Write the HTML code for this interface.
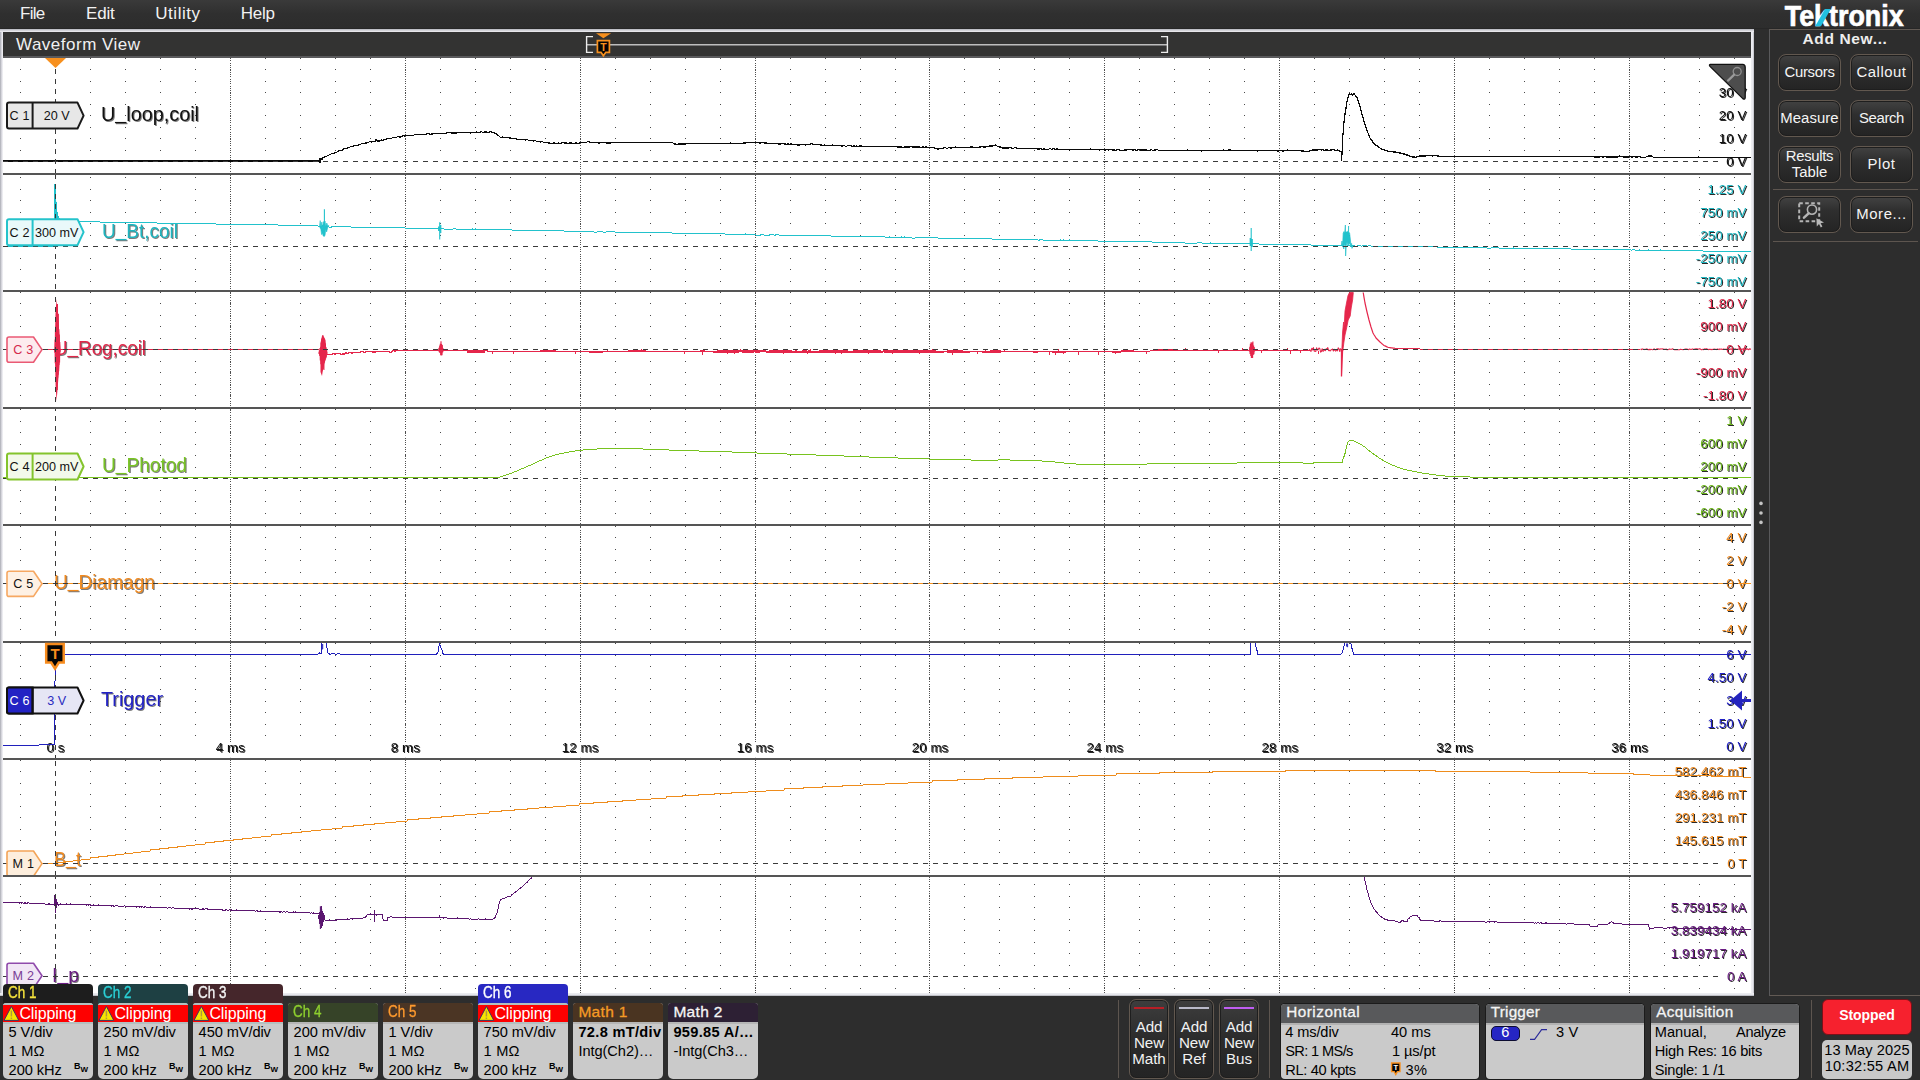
<!DOCTYPE html>
<html><head><meta charset="utf-8"><title>Tektronix Waveform View</title>
<style>
*{box-sizing:border-box;margin:0;padding:0}
html,body{width:1920px;height:1080px;overflow:hidden;background:#2d2d2d}
body{font-family:"Liberation Sans","DejaVu Sans",sans-serif;color:#fff;position:relative;font-size:15px}
.t{position:absolute;white-space:nowrap}
#menubar{position:absolute;left:0;top:0;width:1920px;height:29px;background:linear-gradient(#3a3a3a,#2f2f2f 50%,#2d2d2d);border-bottom:1px solid #272727}
#frame{position:absolute;left:0;top:29px;width:1754.2px;height:967px;background:linear-gradient(90deg,#a9aab2 0,#e4e4ea 2px,#f3f3f6 3px,#eeeef2 1751px,#e6e7ec 1753px,#a4a5ad 1754.2px)}
#frametop{position:absolute;left:0;top:29px;width:1754.2px;height:3px;background:linear-gradient(#b5b6be,#f1f1f4)}
#framebot{position:absolute;left:0;top:992.7px;width:1754.2px;height:3.3px;background:linear-gradient(#eeeef2,#e4e5ea 60%,#a4a5ad)}
#wvhead{position:absolute;left:3px;top:32px;width:1748px;height:26px;background:#333332;border-bottom:2px solid #5a5a5c}
#plot{position:absolute;left:3px;top:58px;width:1748px;height:934.7px;background:#fff;overflow:hidden}
#plot svg{position:absolute;left:0;top:0}
#side{position:absolute;left:1769px;top:29px;width:160px;height:967px;border:1px solid #625a54;border-left-color:#59595b;background:#2d2d2d}
.sbtn{position:absolute;width:63px;height:37px;border:1px solid #62584f;border-radius:8px;background:linear-gradient(#424242,#2e2e2e 40%,#242424);box-shadow:inset 0 0 0 1px #1e1e1e}
.hr{position:absolute;height:1px;background:#5d554f}
.vr{position:absolute;width:1px;background:#5d554f}
.badge{position:absolute;width:90px;top:1003px;height:76px;border-radius:3px 3px 5px 5px;background:linear-gradient(#b6b6b6 0,#b6b6b6 20.6px,#cacaca 21px);overflow:hidden}
.badge .hd{position:absolute;left:0;top:0;width:90px;height:19px}
.tab{position:absolute;width:90px;top:984px;height:24px;border-radius:4px 4px 0 0}
.clip{position:absolute;left:0;top:2px;width:90px;height:17px;background:#fe0000}
.info{position:absolute;top:1004px;height:75px;border-radius:4px;background:linear-gradient(#b2b2b2 0,#b2b2b2 20.6px,#cacaca 21px);overflow:hidden;box-shadow:0 0 0 1px #1b1b1b}
.info .hd{position:absolute;left:0;top:0;right:0;height:19px;background:#58595b}
.addbtn{position:absolute;top:999px;width:40px;height:80px;border:1px solid #62584f;border-radius:7px;background:linear-gradient(#3e3e3e,#2b2b2b 50%,#242424);box-shadow:inset 0 0 0 1px #1e1e1e}
.addbtn i{position:absolute;left:4px;right:4px;top:7px;height:2px;display:block}
.lbl{paint-order:stroke;stroke:#fff;stroke-linejoin:round}
</style></head>
<body>
<div id="menubar">
<span class="t" style="top:3.61px;font-size:17px;line-height:20px;color:#f2f2f2;letter-spacing:-0.7px;left:20px;">File</span>
<span class="t" style="top:3.61px;font-size:17px;line-height:20px;color:#f2f2f2;letter-spacing:-0.2px;left:86px;">Edit</span>
<span class="t" style="top:3.61px;font-size:17px;line-height:20px;color:#f2f2f2;letter-spacing:0.52px;left:155.3px;">Utility</span>
<span class="t" style="top:3.61px;font-size:17px;line-height:20px;color:#f2f2f2;letter-spacing:-0.25px;left:240.8px;">Help</span>
</div>
<svg class="t" style="left:1780px;top:0" width="130" height="30" viewBox="1780 0 130 30"><text x="1784.8" y="26.1" font-family="Liberation Sans, sans-serif" font-weight="bold" font-size="29.6" fill="#fff" stroke="#fff" stroke-width=".7" textLength="118.8" lengthAdjust="spacingAndGlyphs">Tektronix</text><polygon points="1815.2,26.2 1821,26.2 1830.8,9 1825,9" fill="#22bfe0"/></svg>
<div id="frame"></div><div id="frametop"></div><div id="framebot"></div>
<div id="wvhead">
<span class="t" style="top:2.61px;font-size:17px;line-height:20px;color:#f0f0f0;letter-spacing:0.5px;left:13px;">Waveform View</span>
</div>
<svg class="t" style="left:580px;top:30px" width="600" height="30" viewBox="580 30 600 30"><path d="M586.6 44.8H1167.4" fill="none" stroke="#bdbdbd" stroke-width="1.4"/><path d="M593 36.6H586.6V52.4H593M1161 36.6H1167.4V52.4H1161" fill="none" stroke="#ececec" stroke-width="1.4"/><polygon points="596,33.2 611.2,33.2 603.4,38.2" fill="#f7901e"/><path d="M597.4 40.7H609.4V52.3H605.8L603.4 55.8L601 52.3H597.4Z" fill="#050505" stroke="#f7901e" stroke-width="1.7"/><text x="603.4" y="50.6" text-anchor="middle" font-family="Liberation Sans, sans-serif" font-size="10.5" font-weight="bold" fill="#f7901e">T</text></svg>
<div id="plot"><svg width="1749" height="935" viewBox="3 58 1749 935" font-family="Liberation Sans, DejaVu Sans, sans-serif">
<g shape-rendering="crispEdges" stroke="#4a4a4a" stroke-width="1" fill="none">
<path d="M20 58.5H1752M20 69.5H1752M20 81.5H1752M20 92.5H1752M20 104.5H1752M20 115.5H1752M20 127.5H1752M20 138.5H1752M20 150.5H1752M20 177.5H1752M20 189.5H1752M20 200.5H1752M20 212.5H1752M20 223.5H1752M20 235.5H1752M20 258.5H1752M20 269.5H1752M20 281.5H1752M20 292.5H1752M20 303.5H1752M20 315.5H1752M20 326.5H1752M20 338.5H1752M20 361.5H1752M20 372.5H1752M20 384.5H1752M20 395.5H1752M20 409.5H1752M20 421.5H1752M20 432.5H1752M20 444.5H1752M20 455.5H1752M20 467.5H1752M20 490.5H1752M20 501.5H1752M20 513.5H1752M20 526.5H1752M20 537.5H1752M20 549.5H1752M20 560.5H1752M20 572.5H1752M20 595.5H1752M20 606.5H1752M20 618.5H1752M20 629.5H1752M20 643.5H1752M20 655.5H1752M20 666.5H1752M20 678.5H1752M20 689.5H1752M20 701.5H1752M20 712.5H1752M20 724.5H1752M20 735.5H1752M20 760.5H1752M20 771.5H1752M20 783.5H1752M20 794.5H1752M20 806.5H1752M20 817.5H1752M20 829.5H1752M20 840.5H1752M20 852.5H1752M20 884.5H1752M20 896.5H1752M20 907.5H1752M20 919.5H1752M20 930.5H1752M20 942.5H1752M20 953.5H1752M20 965.5H1752M20 988.5H1752" stroke-dasharray="1 33.980"/>
<path d="M55.5 58V993" stroke="#fff"/>
<path d="M230.5 58V993M405.5 58V993M580.5 58V993M755.5 58V993M929.5 58V993M1104.5 58V993M1279.5 58V993M1454.5 58V993M1629.5 58V993" stroke-dasharray="1 1.3" stroke="#505050"/>
<rect x="3" y="173" width="1749" height="2" fill="#555" stroke="none"/>
<rect x="3" y="290" width="1749" height="2" fill="#555" stroke="none"/>
<rect x="3" y="407" width="1749" height="2" fill="#555" stroke="none"/>
<rect x="3" y="524" width="1749" height="2" fill="#555" stroke="none"/>
<rect x="3" y="641" width="1749" height="2" fill="#555" stroke="none"/>
<rect x="3" y="758" width="1749" height="2" fill="#555" stroke="none"/>
<rect x="3" y="875" width="1749" height="2" fill="#555" stroke="none"/>
</g>
<rect x="1717.8" y="87.1" width="30.4" height="11" fill="#fff"/><rect x="1717.8" y="110.1" width="30.4" height="11" fill="#fff"/><rect x="1717.8" y="133.1" width="30.4" height="11" fill="#fff"/><rect x="1725.3" y="156.1" width="22.9" height="11" fill="#fff"/><rect x="1706.5" y="183.6" width="41.7" height="11" fill="#fff"/><rect x="1699.2" y="207.1" width="49.0" height="11" fill="#fff"/><rect x="1699.2" y="230.1" width="49.0" height="11" fill="#fff"/><rect x="1694.6" y="253.1" width="53.6" height="11" fill="#fff"/><rect x="1694.6" y="276.1" width="53.6" height="11" fill="#fff"/><rect x="1706.5" y="298.1" width="41.7" height="11" fill="#fff"/><rect x="1699.2" y="321.1" width="49.0" height="11" fill="#fff"/><rect x="1725.3" y="344.1" width="22.9" height="11" fill="#fff"/><rect x="1694.6" y="367.1" width="53.6" height="11" fill="#fff"/><rect x="1702.0" y="390.1" width="46.2" height="11" fill="#fff"/><rect x="1725.3" y="415.1" width="22.9" height="11" fill="#fff"/><rect x="1699.2" y="438.1" width="49.0" height="11" fill="#fff"/><rect x="1699.2" y="461.1" width="49.0" height="11" fill="#fff"/><rect x="1694.6" y="484.1" width="53.6" height="11" fill="#fff"/><rect x="1694.6" y="507.1" width="53.6" height="11" fill="#fff"/><rect x="1725.3" y="532.1" width="22.9" height="11" fill="#fff"/><rect x="1725.3" y="555.1" width="22.9" height="11" fill="#fff"/><rect x="1725.3" y="578.1" width="22.9" height="11" fill="#fff"/><rect x="1720.8" y="601.1" width="27.4" height="11" fill="#fff"/><rect x="1720.8" y="624.1" width="27.4" height="11" fill="#fff"/><rect x="1725.3" y="649.1" width="22.9" height="11" fill="#fff"/><rect x="1706.5" y="672.1" width="41.7" height="11" fill="#fff"/><rect x="1725.3" y="695.1" width="22.9" height="11" fill="#fff"/><rect x="1706.5" y="718.1" width="41.7" height="11" fill="#fff"/><rect x="1725.3" y="741.1" width="22.9" height="11" fill="#fff"/><rect x="1673.6" y="766.1" width="74.6" height="11" fill="#fff"/><rect x="1673.6" y="789.1" width="74.6" height="11" fill="#fff"/><rect x="1673.6" y="812.1" width="74.6" height="11" fill="#fff"/><rect x="1673.6" y="835.1" width="74.6" height="11" fill="#fff"/><rect x="1726.3" y="858.1" width="21.9" height="11" fill="#fff"/><rect x="1669.8" y="902.1" width="78.4" height="11" fill="#fff"/><rect x="1669.8" y="925.1" width="78.4" height="11" fill="#fff"/><rect x="1669.8" y="948.1" width="78.4" height="11" fill="#fff"/><rect x="1726.1" y="971.1" width="22.1" height="11" fill="#fff"/>
<g font-size="13.3" letter-spacing=".1" text-anchor="end" style="filter:drop-shadow(1px 1px 0 rgba(5,5,5,.85))">
<text x="1746.6" y="97.1" fill="#111">30 V</text>
<text x="1746.6" y="120.1" fill="#111">20 V</text>
<text x="1746.6" y="143.1" fill="#111">10 V</text>
<text x="1746.6" y="166.1" fill="#111">0 V</text>
<text x="1746.6" y="193.6" fill="#1fb5bf">1.25 V</text>
<text x="1746.6" y="217.1" fill="#1fb5bf">750 mV</text>
<text x="1746.6" y="240.1" fill="#1fb5bf">250 mV</text>
<text x="1746.6" y="263.1" fill="#1fb5bf">-250 mV</text>
<text x="1746.6" y="286.1" fill="#1fb5bf">-750 mV</text>
<text x="1746.6" y="308.1" fill="#e0284a">1.80 V</text>
<text x="1746.6" y="331.1" fill="#e0284a">900 mV</text>
<text x="1746.6" y="354.1" fill="#e0284a">0 V</text>
<text x="1746.6" y="377.1" fill="#e0284a">-900 mV</text>
<text x="1746.6" y="400.1" fill="#e0284a">-1.80 V</text>
<text x="1746.6" y="425.1" fill="#6db81c">1 V</text>
<text x="1746.6" y="448.1" fill="#6db81c">600 mV</text>
<text x="1746.6" y="471.1" fill="#6db81c">200 mV</text>
<text x="1746.6" y="494.1" fill="#6db81c">-200 mV</text>
<text x="1746.6" y="517.1" fill="#6db81c">-600 mV</text>
<text x="1746.6" y="542.1" fill="#f08a20">4 V</text>
<text x="1746.6" y="565.1" fill="#f08a20">2 V</text>
<text x="1746.6" y="588.1" fill="#f08a20">0 V</text>
<text x="1746.6" y="611.1" fill="#f08a20">-2 V</text>
<text x="1746.6" y="634.1" fill="#f08a20">-4 V</text>
<text x="1746.6" y="659.1" fill="#2222c4">6 V</text>
<text x="1746.6" y="682.1" fill="#2222c4">4.50 V</text>
<text x="1746.6" y="705.1" fill="#2222c4">3 V</text>
<text x="1746.6" y="728.1" fill="#2222c4">1.50 V</text>
<text x="1746.6" y="751.1" fill="#2222c4">0 V</text>
<text x="1746.6" y="776.1" fill="#f08a20">582.462 mT</text>
<text x="1746.6" y="799.1" fill="#f08a20">436.846 mT</text>
<text x="1746.6" y="822.1" fill="#f08a20">291.231 mT</text>
<text x="1746.6" y="845.1" fill="#f08a20">145.615 mT</text>
<text x="1746.6" y="868.1" fill="#f08a20">0 T</text>
<text x="1746.6" y="912.1" fill="#6a1c82">5.759152 kA</text>
<text x="1746.6" y="935.1" fill="#6a1c82">3.839434 kA</text>
<text x="1746.6" y="958.1" fill="#6a1c82">1.919717 kA</text>
<text x="1746.6" y="981.1" fill="#6a1c82">0 A</text>
</g>
<rect x="45.6" y="742.8" width="20.7" height="15" fill="#fff"/><rect x="215.0" y="742.8" width="31.8" height="15" fill="#fff"/><rect x="389.9" y="742.8" width="31.8" height="15" fill="#fff"/><rect x="561.1" y="742.8" width="39.2" height="15" fill="#fff"/><rect x="736.0" y="742.8" width="39.2" height="15" fill="#fff"/><rect x="910.9" y="742.8" width="39.2" height="15" fill="#fff"/><rect x="1085.8" y="742.8" width="39.2" height="15" fill="#fff"/><rect x="1260.7" y="742.8" width="39.2" height="15" fill="#fff"/><rect x="1435.6" y="742.8" width="39.2" height="15" fill="#fff"/><rect x="1610.5" y="742.8" width="39.2" height="15" fill="#fff"/>
<g font-size="13.3" letter-spacing=".1" text-anchor="middle" fill="#111" style="filter:drop-shadow(1px 1px 0 rgba(5,5,5,.85))">
<text x="55.5" y="752.2">0 s</text>
<text x="230.4" y="752.2">4 ms</text>
<text x="405.3" y="752.2">8 ms</text>
<text x="580.2" y="752.2">12 ms</text>
<text x="755.1" y="752.2">16 ms</text>
<text x="930.0" y="752.2">20 ms</text>
<text x="1104.9" y="752.2">24 ms</text>
<text x="1279.8" y="752.2">28 ms</text>
<text x="1454.7" y="752.2">32 ms</text>
<text x="1629.6" y="752.2">36 ms</text>
</g>
<g font-size="21" style="filter:drop-shadow(1px 1px 0 rgba(17,17,17,.55))">
<text x="101" y="120.8" fill="#111" textLength="98" lengthAdjust="spacingAndGlyphs">U<tspan dy="-1.8">_</tspan><tspan dy="1.8">loop,coil</tspan></text>
<text x="102" y="237.6" fill="#1fb5bf" textLength="76" lengthAdjust="spacingAndGlyphs">U<tspan dy="-1.8">_</tspan><tspan dy="1.8">Bt,coil</tspan></text>
<text x="54" y="354.8" fill="#e0284a" textLength="92" lengthAdjust="spacingAndGlyphs">U<tspan dy="-1.8">_</tspan><tspan dy="1.8">Rog,coil</tspan></text>
<text x="102" y="471.7" fill="#78c424" textLength="85" lengthAdjust="spacingAndGlyphs">U<tspan dy="-1.8">_</tspan><tspan dy="1.8">Photod</tspan></text>
<text x="54" y="589.0" fill="#f08a20" textLength="101" lengthAdjust="spacingAndGlyphs">U<tspan dy="-1.8">_</tspan><tspan dy="1.8">Diamagn</tspan></text>
<text x="101" y="705.7" fill="#2222c4" textLength="62" lengthAdjust="spacingAndGlyphs">Trigger</text>
<text x="54" y="865.9" fill="#f08a20" textLength="27" lengthAdjust="spacingAndGlyphs">B<tspan dy="-1.8">_</tspan><tspan dy="1.8">t</tspan></text>
<text x="52" y="981.8" fill="#6a1c82" textLength="27" lengthAdjust="spacingAndGlyphs">I<tspan dy="-1.8">_</tspan><tspan dy="1.8">p</tspan></text>
</g>
<path d="M3 161L4 161L5 161L6 161L7 161L8 161L9 161L10 161L11 161L12 161L13 161L14 161L15 161L16 161L17 161L18 161L19 161L20 161L21 161L22 161L23 161L24 161L25 161L26 161L27 161L28 161L29 161L30 161L31 161L32 161L33 161L34 161L35 161L36 161L37 161L38 161L39 161L40 161L41 161L42 161L43 161L44 161L45 161L46 161L47 161L48 161L49 161L50 161L51 161L52 161L53 161L54 161L55 161L56 161L57 161L58 161L59 161L60 161L61 161L62 161L63 161L64 161L65 161L66 161L67 161L68 161L69 161L70 161L71 161L72 161L73 161L74 161L75 161L76 161L77 161L78 161L79 161L80 161L81 161L82 161L83 161L84 161L85 161L86 161L87 161L88 161L89 161L90 161L91 161L92 161L93 161L94 161L95 161L96 161L97 161L98 161L99 161L100 161L101 161L102 161L103 161L104 161L105 161L106 161L107 161L108 161L109 161L110 161L111 161L112 161L113 161L114 161L115 161L116 161L117 161L118 161L119 161L120 161L121 161L122 161L123 161L124 161L125 161L126 161L127 161L128 161L129 161L130 161L131 161L132 161L133 161L134 161L135 161L136 161L137 161L138 161L139 161L140 161L141 161L142 161L143 161L144 161L145 161L146 161L147 161L148 161L149 161L150 161L151 161L152 161L153 161L154 161L155 161L156 161L157 161L158 161L159 161L160 161L161 161L162 161L163 161L164 161L165 161L166 161L167 161L168 161L169 161L170 161L171 161L172 161L173 161L174 161L175 161L176 161L177 161L178 161L179 161L180 161L181 161L182 161L183 161L184 161L185 161L186 161L187 161L188 161L189 161L190 161L191 161L192 161L193 161L194 161L195 161L196 161L197 161L198 161L199 161L200 161L201 161L202 161L203 161L204 161L205 161L206 161L207 161L208 161L209 161L210 161L211 161L212 161L213 161L214 161L215 161L216 161L217 161L218 161L219 161L220 161L221 161L222 161L223 161L224 161L225 161L226 161L227 161L228 161L229 161L230 161L231 161L232 161L233 161L234 161L235 161L236 161L237 161L238 161L239 161L240 161L241 161L242 161L243 161L244 161L245 161L246 161L247 161L248 161L249 161L250 161L251 161L252 161L253 161L254 161L255 161L256 161L257 161L258 161L259 161L260 161L261 161L262 161L263 161L264 161L265 161L266 161L267 161L268 161L269 161L270 161L271 161L272 161L273 161L274 161L275 161L276 161L277 161L278 161L279 161L280 161L281 161L282 161L283 161L284 161L285 161L286 161L287 161L288 161L289 161L290 161L291 161L292 161L293 161L294 161L295 161L296 161L297 161L298 161L299 161L300 161L301 161L302 161L303 161L304 161L305 161L306 161L307 161L308 161L309 161L310 161L311 161L312 161L313 161L314 161L315 161L316 161L317 161L318 161L319 161L319.5 158.5L320 163L321 158.5L322 160L323 157.5L324 157L325 157L326 156.5L327 156L328 155.5L329 155L330 154.5L331 154L332 153.5L333 153.5L334 153L335 153L336 152.5L337 152L338 151.5L339 150.5L340 150.5L341 150L342 150.5L343 149L344 149L345 148.5L346 148.5L347 148L348 148L349 147.5L350 147L351 146.5L352 146.5L353 146.5L354 145.5L355 146L356 145.5L357 145.5L358 145L359 145L360 144.5L361 144L362 143.5L363 144L364 143.5L365 143L366 143L367 143L368 142.5L369 142L370 141.5L371 142L372 142L373 141.5L374 141.5L375 141.5L376 139.5L377 141L378 141L379 141L380 141L381 140L382 140L383 140.5L384 139.5L385 139.5L386 139.5L387 138.5L388 139L389 138.5L390 138.5L391 138.5L392 138L393 137.5L394 137.5L395 137.5L396 137.5L397 137L398 136.5L399 137L400 137L401 137L402 136.5L403 135.5L404 136L405 136L406 135.5L407 135.5L408 136L409 135.5L410 135.5L411 135.5L412 135L413 135.5L414 135L415 134.5L416 135L417 134.5L418 135L419 134.5L420 134.5L421 134L422 134.5L423 134.5L424 134.5L425 134.5L426 134.5L427 133.5L428 134L429 133.5L430 134.5L431 134L432 134L433 134L434 133.5L435 134L436 133.5L437 133.5L438 133.5L439 133.5L440 133.5L441 133.5L442 133.5L443 133L444 133.5L445 133.5L446 133L447 133L448 132.5L449 133L450 132.5L451 133L452 133L453 133L454 133L455 133L456 133L457 133L458 132.5L459 133L460 132.5L461 132L462 132.5L463 133L464 132.5L465 132.5L466 132.5L467 132L468 133L469 132.5L470 133L471 133L472 132.5L473 132.5L474 132.5L475 133L476 132L477 132L478 132.5L479 132.5L480 132.5L481 131.5L482 132L483 132.5L484 132L485 132L486 132L487 132L488 132.5L489 132L490 132L491 131.5L492 132.5L493 132L494 133L495 133L496 133.5L497 134.5L498 135.5L499 136L500 137L501 137.5L502 137L503 137L504 137.5L505 137.5L506 137.5L507 138L508 137.5L509 138L510 138L511 138L512 138.5L513 138.5L514 138.5L515 138.5L516 139L517 139L518 139.5L519 139.5L520 139L521 139.5L522 139.5L523 139.5L524 139.5L525 140L526 140L527 139.5L528 140L529 140.5L530 140.5L531 141L532 140.5L533 141L534 141L535 140.5L536 141L537 141.5L538 141.5L539 141.5L540 142L541 142L542 141.5L543 142L544 143L545 142.5L546 143L547 142.5L548 143L549 143L550 143L551 143.5L552 143.5L553 143L554 143L555 143L556 143.5L557 143.5L558 143L559 143L560 143.5L561 143L562 143L563 142.5L564 143L565 143L566 143L567 143L568 143.5L569 143L570 143L571 143L572 143L573 143.5L574 143.5L575 143L576 143L577 143L578 143.5L579 143L580 143L581 142.5L582 142.5L583 142.5L584 143L585 142.5L586 142.5L587 142L588 141.5L589 142L590 142L591 142.5L592 142.5L593 142.5L594 142.5L595 142.5L596 143L597 142L598 143L599 143L600 143L601 142.5L602 142.5L603 142.5L604 142.5L605 142.5L606 143L607 143L608 143L609 143L610 143L611 143L612 142.5L613 143L614 142L615 142.5L616 142.5L617 142.5L618 142.5L619 142.5L620 143L621 142.5L622 142.5L623 143L624 142.5L625 142.5L626 142.5L627 142L628 142.5L629 142.5L630 142.5L631 142L632 142.5L633 142L634 142.5L635 142.5L636 142.5L637 142.5L638 142.5L639 142L640 142.5L641 142.5L642 142.5L643 142.5L644 143L645 142.5L646 142L647 142.5L648 142.5L649 142.5L650 143L651 142.5L652 142L653 142.5L654 142.5L655 142.5L656 142.5L657 142L658 143L659 142.5L660 142.5L661 142L662 142.5L663 142.5L664 142.5L665 142L666 142.5L667 142.5L668 142.5L669 142.5L670 142.5L671 142.5L672 142.5L673 143L674 144L675 144L676 144L677 144.5L678 144L679 144L680 144L681 144L682 144L683 144L684 144L685 144L686 144L687 143.5L688 143.5L689 143.5L690 143L691 143.5L692 143.5L693 143L694 143.5L695 143L696 143.5L697 143.5L698 143.5L699 143.5L700 143.5L701 143.5L702 143.5L703 143.5L704 143.5L705 143.5L706 143.5L707 143.5L708 143.5L709 143.5L710 143.5L711 144L712 143.5L713 143.5L714 143.5L715 143.5L716 143.5L717 143.5L718 144L719 143.5L720 143.5L721 143.5L722 143.5L723 143L724 143.5L725 143.5L726 143.5L727 143.5L728 143.5L729 143.5L730 143L731 143L732 144L733 143.5L734 143.5L735 143.5L736 143.5L737 143L738 143.5L739 143.5L740 143L741 143.5L742 143.5L743 143L744 143L745 143L746 143L747 142.5L748 143L749 142.5L750 142.5L751 142.5L752 143L753 142.5L754 142.5L755 142.5L756 142.5L757 142.5L758 142.5L759 143L760 143L761 143L762 142.5L763 142.5L764 143L765 143L766 143L767 143L768 143.5L769 143L770 143.5L771 143.5L772 144L773 143.5L774 143L775 143.5L776 143.5L777 143.5L778 144L779 144L780 144L781 144L782 143.5L783 143.5L784 144L785 144L786 144L787 144.5L788 143.5L789 144.5L790 144L791 144L792 144L793 144.5L794 144.5L795 144.5L796 144.5L797 145L798 145L799 145L800 145L801 144.5L802 144.5L803 144.5L804 144.5L805 145L806 145L807 144.5L808 144.5L809 144.5L810 144L811 144L812 143.5L813 144.5L814 144.5L815 144.5L816 144.5L817 145L818 144.5L819 144.5L820 145L821 145L822 145L823 145.5L824 145L825 145L826 145.5L827 145.5L828 145.5L829 145.5L830 145.5L831 145.5L832 145L833 145L834 146L835 145.5L836 145.5L837 145L838 145.5L839 146L840 145.5L841 146L842 146L843 146L844 145.5L845 146L846 146.5L847 146L848 145.5L849 145.5L850 145.5L851 146L852 146L853 146.5L854 145.5L855 146.5L856 146L857 146L858 146.5L859 146L860 146L861 146L862 146L863 146.5L864 146.5L865 146.5L866 146L867 146.5L868 146.5L869 146L870 146.5L871 146L872 147L873 146.5L874 147L875 146L876 146.5L877 146L878 146.5L879 146.5L880 146L881 147L882 146.5L883 146.5L884 146.5L885 146L886 146.5L887 146L888 146.5L889 147L890 146.5L891 146.5L892 146.5L893 146.5L894 147L895 146.5L896 146L897 147L898 147L899 147L900 147L901 147L902 147L903 147.5L904 147L905 147L906 147L907 147L908 147L909 147L910 147L911 146.5L912 147L913 147L914 147L915 147L916 147L917 147L918 147L919 147L920 147L921 147.5L922 147L923 147L924 147L925 147.5L926 146.5L927 147.5L928 147.5L929 147L930 147.5L931 148L932 147L933 147.5L934 147.5L935 148.5L936 148.5L937 149L938 149L939 149L940 148.5L941 148.5L942 148.5L943 148L944 148L945 147.5L946 148L947 148.5L948 148L949 147.5L950 148L951 148L952 148L953 147.5L954 148L955 147L956 147L957 148L958 147.5L959 147.5L960 147.5L961 148L962 147.5L963 147.5L964 147.5L965 147.5L966 147.5L967 147.5L968 147.5L969 147.5L970 147L971 147L972 147L973 147L974 147.5L975 147L976 147.5L977 147L978 147.5L979 147L980 147L981 147L982 146.5L983 147L984 147L985 147L986 147L987 146.5L988 146.5L989 146L990 146L991 146L992 146L993 146L994 145.5L995 145L996 145L997 146L998 146.5L999 147L1000 147L1001 147L1002 148L1003 148L1004 148L1005 148L1006 148L1007 148L1008 148L1009 148L1010 147.5L1011 148L1012 148L1013 148.5L1014 148L1015 147.5L1016 148L1017 148L1018 148.5L1019 148.5L1020 148.5L1021 148.5L1022 148L1023 148.5L1024 148.5L1025 148.5L1026 149L1027 148.5L1028 148L1029 148.5L1030 148L1031 148.5L1032 148.5L1033 148.5L1034 148L1035 149L1036 148L1037 149L1038 149L1039 149L1040 149L1041 148.5L1042 149.5L1043 149L1044 149L1045 149L1046 149.5L1047 149L1048 149.5L1049 149L1050 148.5L1051 149L1052 149.5L1053 148.5L1054 149L1055 149L1056 149.5L1057 148.5L1058 149.5L1059 149.5L1060 149.5L1061 149.5L1062 149.5L1063 149.5L1064 149.5L1065 149.5L1066 149.5L1067 149.5L1068 149L1069 150L1070 150L1071 149.5L1072 149.5L1073 149.5L1074 149.5L1075 150L1076 149.5L1077 149L1078 150L1079 149.5L1080 149.5L1081 150L1082 149.5L1083 149L1084 149.5L1085 149L1086 149.5L1087 150L1088 149.5L1089 149.5L1090 149L1091 149L1092 149.5L1093 149.5L1094 149.5L1095 149.5L1096 149L1097 150L1098 149.5L1099 150L1100 150L1101 149.5L1102 150L1103 149.5L1104 150L1105 150L1106 150L1107 149.5L1108 150L1109 150L1110 149.5L1111 149.5L1112 150L1113 150L1114 150L1115 150L1116 150.5L1117 149.5L1118 149.5L1119 150L1120 150L1121 150.5L1122 150L1123 150.5L1124 150L1125 150L1126 150L1127 150L1128 149.5L1129 150L1130 149.5L1131 149.5L1132 150L1133 150L1134 150L1135 149.5L1136 150.5L1137 150L1138 150L1139 149.5L1140 150L1141 150L1142 150L1143 150L1144 150L1145 150L1146 150L1147 150L1148 150.5L1149 150L1150 150.5L1151 149.5L1152 150L1153 150.5L1154 150L1155 150L1156 150L1157 149.5L1158 150L1159 150.5L1160 150.5L1161 150L1162 150.5L1163 150.5L1164 150.5L1165 150.5L1166 150.5L1167 150.5L1168 150L1169 150.5L1170 150.5L1171 150.5L1172 150L1173 150.5L1174 150.5L1175 151L1176 150.5L1177 150.5L1178 150L1179 150.5L1180 151L1181 150.5L1182 150L1183 151L1184 150.5L1185 150.5L1186 150.5L1187 150L1188 150L1189 150.5L1190 150.5L1191 150.5L1192 150.5L1193 150L1194 150.5L1195 151L1196 150.5L1197 150.5L1198 150L1199 150.5L1200 150.5L1201 151L1202 151L1203 150L1204 151L1205 150L1206 151L1207 150.5L1208 150.5L1209 150L1210 150.5L1211 150.5L1212 150.5L1213 150.5L1214 150L1215 150.5L1216 150.5L1217 150.5L1218 150.5L1219 150.5L1220 151L1221 150.5L1222 150.5L1223 150L1224 150L1225 150.5L1226 151L1227 150.5L1228 150L1229 150L1230 150L1231 150L1232 150.5L1233 150.5L1234 150.5L1235 150.5L1236 150.5L1237 150L1238 150.5L1239 150.5L1240 150.5L1241 150.5L1242 150.5L1243 150.5L1244 150.5L1245 150.5L1246 150L1247 150.5L1248 150.5L1249 150.5L1250 150.5L1251 150.5L1252 150L1253 150.5L1254 150.5L1255 150.5L1256 150.5L1257 151L1258 151L1259 150.5L1260 150.5L1261 150.5L1262 150.5L1263 150L1264 150.5L1265 150.5L1266 150.5L1267 150.5L1268 150.5L1269 150.5L1270 150.5L1271 150.5L1272 150.5L1273 150L1274 151L1275 150.5L1276 150.5L1277 151L1278 151L1279 151L1280 150.5L1281 150.5L1282 151L1283 151L1284 151L1285 150L1286 150.5L1287 150L1288 150L1289 150.5L1290 150.5L1291 150.5L1292 151L1293 150.5L1294 150.5L1295 150.5L1296 150.5L1297 150.5L1298 150.5L1299 150.5L1300 150.5L1301 151L1302 151L1303 151L1304 151L1305 151.5L1306 151.5L1307 151.5L1308 152L1309 151L1310 151L1311 150.5L1312 150L1313 150L1314 150L1315 150L1316 150L1317 150L1318 150L1319 149.5L1320 149.5L1321 150L1322 150L1323 149.5L1324 150.5L1325 150L1326 150L1327 150L1328 150L1329 150.5L1330 150L1331 150L1332 150L1333 149.5L1334 150L1335 150L1336 150.5L1337 150L1338 150L1339 151L1340 151L1341.2 152L1341.6 160L1342.2 150L1342.8 136.5L1343.6 127L1344.4 118L1345.6 110.5L1346.7 103.5L1347.6 99L1348.5 95L1349.5 93.5L1350.5 94.5L1351.5 93.5L1352.5 95L1353.5 93.5L1354.2 94L1355 95L1356.1 96.5L1357.2 98L1358.3 101.5L1359.5 105L1360.6 109L1361.7 113L1362.8 117L1363.9 121L1364.8 124L1365.8 127L1366.7 130L1367.8 132.5L1368.9 135L1370 138L1371.1 139.5L1372.2 141L1373.3 143L1374.4 144L1375.5 145L1376.7 145.5L1377.8 146.5L1378.9 147.5L1380 148L1381.1 148.5L1382.2 149.5L1383.2 149.5L1384.1 150L1385.1 150L1386 150.5L1387 151L1387.9 151L1388.9 151.5L1389.9 151.5L1390.9 151.5L1391.9 151.5L1392.9 152L1393.8 152L1394.8 152L1395.8 152L1396.8 152.5L1397.8 152.5L1398.7 152.5L1399.7 153L1400.6 153L1401.6 153.5L1402.5 153.5L1403.5 154L1404.4 154L1405.3 154.5L1406.3 155L1407.2 155L1408.2 155.5L1409.1 156L1410.1 156L1411 156.5L1411.9 156.5L1412.8 157L1413.8 157L1414.7 157L1415.6 157.5L1416.7 157L1417.8 156.5L1418.9 156L1419.9 156L1420.9 156L1421.9 156L1422.9 156L1423.9 156L1424.9 156L1425.9 156L1426.9 155.5L1427.9 156L1428.9 155.5L1429.9 156L1430.9 155.5L1431.9 156L1432.9 156L1433.9 155.5L1434.9 156L1435.9 155.5L1436.9 156L1437.9 156L1438.9 156L1440 156.5L1441 156L1442 156.5L1443 156.5L1444 156.5L1445 156.5L1446 156.5L1447 156.5L1448 156.5L1449 156.5L1450 156.5L1451 156.5L1452 156.5L1453 156.5L1454 156.5L1455 156.5L1456 156.5L1457 156.5L1458 156.5L1459 156L1460 156.5L1461 156.5L1462 156L1463 156.5L1464 156.5L1465 156.5L1466 156.5L1467 156L1468 156.5L1469 156.5L1470 156.5L1471 156.5L1472 156.5L1473 156.5L1474 156L1475 156.5L1476 156.5L1477 156.5L1478 156.5L1479 156.5L1480 156L1481 156.5L1482 156.5L1483 156.5L1484 156.5L1485 156.5L1486 156.5L1487 156.5L1488 156.5L1489 156.5L1490 156.5L1491 156.5L1492 156.5L1493 156.5L1494 156.5L1495 156L1496 156.5L1497 156.5L1498 156.5L1499 156.5L1500 156.5L1501 156L1502 156.5L1503 156.5L1504 156.5L1505 156.5L1506 156.5L1507 156.5L1508 156.5L1509 156.5L1510 156.5L1511 156.5L1512 156.5L1513 156.5L1514 156L1515 156.5L1516 156.5L1517 156.5L1518 156.5L1519 156.5L1520 156.5L1521 156.5L1522 156.5L1523 156.5L1524 156.5L1525 156L1526 156.5L1527 156.5L1528 156.5L1529 156.5L1530 156.5L1531 156.5L1532 156.5L1533 156.5L1534 156.5L1535 156.5L1536 156.5L1537 156.5L1538 156.5L1539 156.5L1540 156.5L1541 156.5L1542 156.5L1543 156.5L1544 156.5L1545 156.5L1546 156L1547 156.5L1548 156.5L1549 156.5L1550 156.5L1551 156.5L1552 156.5L1553 156.5L1554 156.5L1555 156.5L1556 156.5L1557 156.5L1558 156.5L1559 156.5L1560 156L1561 156.5L1562 156.5L1563 156.5L1564 156.5L1565 156.5L1566 156.5L1567 156.5L1568 156.5L1569 156.5L1570 156.5L1571 156.5L1572 156.5L1573 156.5L1574 156.5L1575 156.5L1576 156.5L1577 156.5L1578 156.5L1579 156.5L1580 156.5L1581 156.5L1582 156.5L1583 156.5L1584 156.5L1585 156.5L1586 156.5L1587 156.5L1588 156.5L1589 156.5L1590 156L1591 156.5L1592 156.5L1593 156.5L1594 157L1595 157L1596 157L1597 157L1598 157L1599 157L1600 157L1601 156.5L1602 157L1603 157L1604 157L1605 156.5L1606 157L1607 157L1608 157L1609 157L1610 157L1611 157L1612 157L1613 157L1614 157L1615 157L1616 157L1617 157L1618 157L1619 156L1620 156L1621 156.5L1622 156L1623 157L1624 157L1625 157L1626 157L1627 157L1628 157L1629 157L1630 156.5L1631 157L1632 157L1633 157L1634 156.5L1635 157L1636 157L1637 157L1638 157L1639 156.5L1640 157L1641 157L1642 157.5L1643 157.5L1644 157.5L1645 157.5L1646 157L1647 156.5L1648 156L1649 156L1650 156L1651 156L1652 156L1653 157L1654 157.5L1655 157.5L1656 157.5L1657 157.5L1658 157.5L1659 157.5L1660 157.5L1661 157.5L1662 157.5L1663 157.5L1664 157.5L1665 157.5L1666 157.5L1667 157.5L1668 157.5L1669 157.5L1670 157.5L1671 157.5L1672 157.5L1673 157.5L1674 157.5L1675 157.5L1676 157.5L1677 157.5L1678 157.5L1679 157.5L1680 157.5L1681 157.5L1682 157.5L1683 157.5L1684 157.5L1685 157.5L1686 157.5L1687 157.5L1688 157.5L1689 157.5L1690 157.5L1691 157.5L1692 157.5L1693 157.5L1694 157.5L1695 157.5L1696 157.5L1697 157.5L1698 157L1699 157L1700 157.5L1701 157.5L1702 157.5L1703 157.5L1704 157.5L1705 157.5L1706 157.5L1707 157.5L1708 157.5L1709 157L1710 157.5L1711 157.5L1712 157.5L1713 157.5L1714 157.5L1715 157L1716 157.5L1717 157.5L1718 157.5L1719 157.5L1720 157.5L1721 157.5L1722 157.5L1723 157.5L1724 157.5L1725 157.5L1726 157.5L1727 157L1728 157.5L1729 157.5L1730 157.5L1731 157L1732 157.5L1733 157.5L1734 157.5L1735 157.5L1736 157.5L1737 157L1738 157.5L1739 157.5L1740 157.5L1741 157.5L1742 157.5L1743 157.5L1744 157L1745 157.5L1746 157.5L1747 157.5L1748 157.5L1749 157.5L1750 157.5L1751 157.5L1752 157.5" fill="none" stroke="#0a0a0a" stroke-width="1.2" stroke-linejoin="round" shape-rendering="crispEdges" />
<path d="M3 246L3.5 246L4 246L4.5 246L5 246L5.5 246L6 246L6.5 246L7 246L7.5 246L8 246L8.5 246L9 246L9.5 246L10 246L10.5 246L11 246L11.5 246L12 246L12.5 246L13 246L13.5 246L14 246L14.5 246L15 246L15.5 246L16 246L16.5 246L17 246L17.5 246L18 246L18.5 246L19 246L19.5 246L20 246L20.5 246L21 246L21.5 246L22 246L22.5 246L23 246L23.5 246L24 246L24.5 246L25 246L25.5 246L26 246L26.5 246L27 246L27.5 246L28 246L28.5 246L29 246L29.5 246L30 246L30.5 246L31 246L31.5 246L32 246L32.5 246L33 246L33.5 246L34 246L34.5 246L35 246L35.5 246L36 246L36.5 246L37 246L37.5 246L38 246L38.5 246L39 246L39.5 246L40 246L40.5 246L41 246L41.5 246L42 246L42.5 246L43 246L43.5 246L44 246L44.5 246L45 246L45.5 246L46 246L46.5 246L47 246L47.5 246L48 246L48.5 246L49 246L49.5 246L50 246L50.5 246L51 246L51.5 246L52 246L52.5 246L53 246L53.5 246L54 246L54.5 220L55 184.5L55.6 196L56.2 205L56.6 208.5L57 212L57.5 214.2L58 216.5L58.5 217.3L59 218.2L59.5 219L60 219.3L60.5 219.6L61 220L61.5 220.3L62 220.6L62.5 220.6L63 220.7L63.5 220.7L64 220.8L64.5 220.8L65 220.9L65.5 220.9L66 220.9L66.5 221L67 221L67.5 221.1L68 221.1L68.5 221.2L69 221.2L69.5 221.3L70 221.3L70.5 221.3L71 221.3L71.5 221.3L72 221.4L72.5 221.4L73 221.4L73.5 221.4L74 221.4L74.5 221.4L75 221.4L75.5 221.4L76 221.5L76.5 221.5L77 221.5L77.5 221.5L78 221.5L78.5 221.5L79 221.5L79.5 221.6L80 221.6L80.5 221.6L81 221.6L81.5 221.6L82 221.6L82.5 221.6L83 221.6L83.5 221.7L84 221.7L84.5 221.7L85 221.7L85.5 221.7L86 221.7L86.5 221.7L87 221.7L87.5 221.7L88 221.8L88.5 221.8L89 221.8L89.5 221.8L90 221.8L90.5 221.8L91 221.8L91.5 221.8L92 221.8L92.5 221.8L93 221.8L93.5 221.8L94 221.9L94.5 221.9L95 221.9L95.5 221.9L96 221.9L96.5 221.9L97 221.9L97.5 221.9L98 221.9L98.5 221.9L99 221.9L99.5 222L100 222L100.5 222L101 222L101.5 222L102 222L102.5 222L103 222L103.5 222L104 222L104.5 222L105 222L105.5 222.1L106 222.1L106.5 222.1L107 222.1L107.5 222.1L108 222.1L108.5 222.1L109 222.1L109.5 222.1L110 222.1L110.5 222.1L111 222.2L111.5 222.2L112 222.2L112.5 222.2L113 222.2L113.5 222.2L114 222.2L114.5 222.2L115 222.2L115.5 222.2L116 222.2L116.5 222.2L117 222.3L117.5 222.3L118 222.3L118.5 222.3L119 222.3L119.5 222.3L120 222.3L120.5 222.3L121 222.3L121.5 222.3L122 222.3L122.5 222.4L123 222.4L123.5 222.4L124 222.4L124.5 222.4L125 222.4L125.5 222.4L126 222.4L126.5 222.4L127 222.4L127.5 222.4L128 222.4L128.5 222.5L129 222.5L129.5 222.5L130 222.5L130.5 222.5L131 222.5L131.5 222.5L132 222.5L132.5 222.5L133 222.5L133.5 222.5L134 222.6L134.5 222.6L135 222.6L135.5 222.6L136 222.6L136.5 222.6L137 222.6L137.5 222.6L138 222.6L138.5 222.6L139 222.6L139.5 222.6L140 222.7L140.5 222.7L141 222.7L141.5 222.7L142 222.7L142.5 222.7L143 222.7L143.5 222.7L144 222.7L144.5 222.7L145 222.7L145.5 222.8L146 222.8L146.5 222.8L147 222.8L147.5 222.8L148 222.8L148.5 222.8L149 222.8L149.5 222.8L150 222.8L150.5 222.8L151 222.8L151.5 222.9L152 222.9L152.5 222.9L153 222.9L153.5 222.9L154 222.9L154.5 222.9L155 222.9L155.5 222.9L156 222.9L156.5 222.9L157 223L157.5 223L158 223L158.5 223L159 223L159.5 223L160 223L160.5 223L161 223L161.5 223L162 223L162.5 223L163 223.1L163.5 223.1L164 223.1L164.5 223.1L165 223.1L165.5 223.1L166 223.1L166.5 223.1L167 223.1L167.5 223.1L168 223.1L168.5 223.2L169 223.2L169.5 223.2L170 223.2L170.5 223.2L171 223.2L171.5 223.2L172 223.2L172.5 223.2L173 223.2L173.5 223.2L174 223.2L174.5 223.3L175 223.3L175.5 223.3L176 223.3L176.5 223.3L177 223.3L177.5 223.3L178 223.3L178.5 223.3L179 223.3L179.5 223.3L180 223.4L180.5 223.4L181 223.4L181.5 223.4L182 223.4L182.5 223.4L183 223.4L183.5 223.4L184 223.4L184.5 223.4L185 223.4L185.5 223.4L186 223.5L186.5 223.5L187 223.5L187.5 223.5L188 223.5L188.5 223.5L189 223.5L189.5 223.5L190 223.5L190.5 223.5L191 223.5L191.5 223.6L192 223.6L192.5 223.6L193 223.6L193.5 223.6L194 223.6L194.5 223.6L195 223.6L195.5 223.6L196 223.6L196.5 223.6L197 223.6L197.5 223.7L198 223.7L198.5 223.7L199 223.7L199.5 223.7L200 223.7L200.5 223.7L201 223.7L201.5 223.7L202 223.7L202.5 223.7L203 223.7L203.5 223.8L204 223.8L204.5 223.8L205 223.8L205.5 223.8L206 223.8L206.5 223.8L207 223.8L207.5 223.8L208 223.8L208.5 223.8L209 223.8L209.5 223.9L210 223.9L210.5 223.9L211 223.9L211.5 223.9L212 223.9L212.5 223.9L213 223.9L213.5 223.9L214 223.9L214.5 223.9L215 223.9L215.5 223.9L216 224L216.5 224L217 224L217.5 224L218 224L218.5 224L219 224L219.5 224L220 224L220.5 224L221 224L221.5 224L222 224.1L222.5 224.1L223 224.1L223.5 224.1L224 224.1L224.5 224.1L225 224.1L225.5 224.1L226 224.1L226.5 224.1L227 224.1L227.5 224.1L228 224.2L228.5 224.2L229 224.2L229.5 224.2L230 224.2L230.5 224.2L231 224.2L231.5 224.2L232 224.2L232.5 224.2L233 224.2L233.5 224.2L234 224.2L234.5 224.3L235 224.3L235.5 224.3L236 224.3L236.5 224.3L237 224.3L237.5 224.3L238 224.3L238.5 224.3L239 224.3L239.5 224.3L240 224.3L240.5 224.4L241 224.4L241.5 224.4L242 224.4L242.5 224.4L243 224.4L243.5 224.4L244 224.4L244.5 224.4L245 224.4L245.5 224.4L246 224.4L246.5 224.4L247 224.5L247.5 224.5L248 224.5L248.5 224.5L249 224.5L249.5 224.5L250 224.5L250.5 224.5L251 224.5L251.5 224.5L252 224.5L252.5 224.5L253 224.6L253.5 224.6L254 224.6L254.5 224.6L255 224.6L255.5 224.6L256 224.6L256.5 224.6L257 224.6L257.5 224.6L258 224.6L258.5 224.6L259 224.6L259.5 224.7L260 224.7L260.5 224.7L261 224.7L261.5 224.7L262 224.7L262.5 224.7L263 224.7L263.5 224.7L264 224.7L264.5 224.7L265 224.7L265.5 224.8L266 224.8L266.5 224.8L267 224.8L267.5 224.8L268 224.8L268.5 224.8L269 224.8L269.5 224.8L270 224.8L270.5 224.8L271 224.8L271.5 224.9L272 224.9L272.5 224.9L273 224.9L273.5 224.9L274 224.9L274.5 224.9L275 224.9L275.5 224.9L276 224.9L276.5 224.9L277 224.9L277.5 224.9L278 225L278.5 225L279 225L279.5 225L280 225L280.5 225L281 225L281.5 225L282 225L282.5 225L283 225L283.5 225L284 225.1L284.5 225.1L285 225.1L285.5 225.1L286 225.1L286.5 225.1L287 225.1L287.5 225.1L288 225.1L288.5 225.1L289 225.1L289.5 225.1L290 225.1L290.5 225.2L291 225.2L291.5 225.2L292 225.2L292.5 225.2L293 225.2L293.5 225.2L294 225.2L294.5 225.2L295 225.2L295.5 225.2L296 225.2L296.5 225.3L297 225.3L297.5 225.3L298 225.3L298.5 225.3L299 225.3L299.5 225.3L300 225.3L300.5 225.3L301 225.3L301.5 225.3L302 225.3L302.5 225.4L303 225.4L303.5 225.4L304 225.4L304.5 225.4L305 225.4L305.5 225.4L306 225.4L306.5 225.4L307 225.4L307.5 225.4L308 225.4L308.5 225.4L309 225.5L309.5 225.5L310 225.5L310.5 225.5L311 225.5L311.5 225.5L312 225.5L312.5 225.5L313 225.5L313.5 225.5L314 225.5L314.5 225.5L315 225.6L315.5 225.6L316 225.6L316.5 225.6L317 225.6L317.5 225.6L318 225.6" fill="none" stroke="#22c2cc" stroke-width="1" stroke-linejoin="round" shape-rendering="crispEdges" />
<path d="M54.3 246L54.6 200L55.2 184L56 200L57.2 213L59 219L61 221V246Z" fill="#22c2cc" stroke="none"/>
<path d="M318 226L319.5 226.5L321 226.5L322.5 226L324 226.5L325.5 227L327 226.5L328.5 227L330 227L331.5 227L333 226.5L334.5 226.5L336 226.5L337.5 226.5L339 226.5L340.5 226.5L342 226.5L343.5 226.5L345 226.5L346.5 226.5L348 226.5L349.5 226.5L351 227L352.5 227L354 227L355.5 227L357 227L358.5 227L360 227L361.5 227L363 227L364.5 227L366 227L367.5 227L369 227L370.5 227L372 227L373.5 227L375 227L376.5 227L378 227.5L379.5 227.5L381 227.5L382.5 227.5L384 227.5L385.5 227.5L387 227.5L388.5 227.5L390 227.5L391.5 227.5L393 227.5L394.5 227.5L396 227.5L397.5 227.5L399 227.5L400.5 227.5L402 227.5L403.5 227.5L405 228L406.5 228L408 228L409.5 228L411 228L412.5 228L414 228L415.5 228L417 228L418.5 228L420 228L421.5 228L423 228L424.5 228L426 228L427.5 228L429 228L430.5 228L432 228.5L433.5 228.5L435 228.5L436.5 228.5L438 228.5L439.5 228.5L441 228.5L442.5 228.5L444 229L445.5 229L447 229L448.5 229L450 229L451.5 229L453 229L454.5 228.5L456 229L457.5 229.5L459 229L460.5 229L462 229.5L463.5 229L465 229L466.5 229.5L468 229L469.5 229.5L471 229.5L472.5 229L474 229.5L475.5 229L477 229.5L478.5 229.5L480 229.5L481.5 229L483 229L484.5 229.5L486 229.5L487.5 229.5L489 229.5L490.5 229.5L492 229.5L493.5 229.5L495 229.5L496.5 229.5L498 229.5L499.5 229.5L501 229.5L502.5 229.5L504 229.5L505.5 229.5L507 229.5L508.5 229.5L510 229.5L511.5 230L513 230L514.5 230L516 230L517.5 230L519 230L520.5 230L522 230L523.5 230L525 230L526.5 230L528 230L529.5 230L531 230L532.5 230L534 230L535.5 230L537 230L538.5 230.5L540 230.5L541.5 230.5L543 230.5L544.5 230.5L546 230.5L547.5 230.5L549 230.5L550.5 230.5L552 230.5L553.5 230.5L555 230.5L556.5 230.5L558 230.5L559.5 230.5L561 230.5L562.5 230.5L564 231L565.5 231L567 231L568.5 231L570 231L571.5 231L573 231L574.5 231L576 231L577.5 231L579 231L580.5 231L582 231L583.5 231L585 231L586.5 231L588 231L589.5 231L591 231.5L592.5 231.5L594 232L595.5 232L597 232L598.5 231.5L600 232L601.5 231.5L603 232L604.5 232L606 232L607.5 231.5L609 231.5L610.5 231.5L612 232L613.5 231.5L615 232L616.5 232L618 232L619.5 232.5L621 232.5L622.5 232.5L624 232L625.5 232L627 232L628.5 232.5L630 232L631.5 232L633 232L634.5 232L636 232L637.5 232L639 232L640.5 232L642 232L643.5 232L645 232.5L646.5 232.5L648 232.5L649.5 232.5L651 232.5L652.5 232.5L654 232.5L655.5 232.5L657 232.5L658.5 232.5L660 232.5L661.5 232.5L663 232.5L664.5 232.5L666 232.5L667.5 232.5L669 232.5L670.5 232.5L672 233L673.5 233L675 233L676.5 233L678 233L679.5 233L681 233L682.5 233L684 233L685.5 233L687 233L688.5 233L690 233L691.5 233L693 233L694.5 233L696 233L697.5 233.5L699 233.5L700.5 233.5L702 233.5L703.5 233.5L705 233.5L706.5 233.5L708 233.5L709.5 233.5L711 233.5L712.5 233.5L714 233.5L715.5 233.5L717 233.5L718.5 233.5L720 233.5L721.5 233.5L723 233.5L724.5 234L726 234L727.5 234L729 234L730.5 234L732 234L733.5 234L735 234L736.5 234L738 234L739.5 234L741 234L742.5 234L744 234.5L745.5 234L747 234.5L748.5 234.5L750 234.5L751.5 234.5L753 235L754.5 234.5L756 235L757.5 235L759 235L760.5 235L762 234.5L763.5 235L765 235L766.5 235L768 235L769.5 235L771 234.5L772.5 234.5L774 235L775.5 235L777 234.5L778.5 235L780 235L781.5 235L783 235L784.5 235L786 235L787.5 235L789 235L790.5 235L792 235L793.5 235L795 235L796.5 235L798 235L799.5 235L801 235L802.5 235L804 235L805.5 235.5L807 235.5L808.5 235.5L810 235.5L811.5 235.5L813 235.5L814.5 235.5L816 235.5L817.5 235.5L819 235.5L820.5 235.5L822 235.5L823.5 235.5L825 235.5L826.5 235.5L828 235.5L829.5 235.5L831 236L832.5 236L834 236L835.5 236L837 236L838.5 236L840 236L841.5 236L843 236L844.5 236L846 236L847.5 236L849 236L850.5 236L852 236L853.5 236L855 236L856.5 236L858 236.5L859.5 236.5L861 236.5L862.5 236.5L864 236.5L865.5 236.5L867 236.5L868.5 236.5L870 236.5L871.5 236.5L873 236.5L874.5 236.5L876 236.5L877.5 236.5L879 236.5L880.5 236.5L882 236.5L883.5 236.5L885 237L886.5 237L888 237.5L889.5 237L891 237.5L892.5 237.5L894 237L895.5 237.5L897 237.5L898.5 237.5L900 237.5L901.5 237L903 237.5L904.5 237L906 237.5L907.5 237L909 237L910.5 237.5L912 238L913.5 238L915 238L916.5 237.5L918 238L919.5 237.5L921 237.5L922.5 237.5L924 238L925.5 237.5L927 237.5L928.5 237.5L930 237.5L931.5 237.5L933 237.5L934.5 237.5L936 237.5L937.5 238L939 238L940.5 238L942 238L943.5 238L945 238L946.5 238L948 238L949.5 238L951 238L952.5 238L954 238L955.5 238L957 238L958.5 238L960 238L961.5 238L963 238L964.5 238.5L966 238.5L967.5 238.5L969 238.5L970.5 238.5L972 238.5L973.5 238.5L975 238.5L976.5 238.5L978 238.5L979.5 238.5L981 238.5L982.5 238.5L984 238.5L985.5 238.5L987 238.5L988.5 238.5L990 238.5L991.5 239L993 239L994.5 239L996 239L997.5 239L999 239L1000.5 239L1002 239L1003.5 239L1005 239L1006.5 239L1008 239L1009.5 239L1011 239L1012.5 239L1014 239L1015.5 239L1017 239L1018.5 239.5L1020 239.5L1021.5 239.5L1023 239.5L1024.5 239.5L1026 239.5L1027.5 239.5L1029 239.5L1030.5 239.5L1032 239.5L1033.5 239.5L1035 239.5L1036.5 239.5L1038 240L1039.5 240L1041 239.5L1042.5 239.5L1044 240.5L1045.5 240.5L1047 240L1048.5 240.5L1050 240L1051.5 240L1053 240.5L1054.5 240.5L1056 240.5L1057.5 240.5L1059 240.5L1060.5 240L1062 240.5L1063.5 240L1065 240.5L1066.5 240.5L1068 240.5L1069.5 240L1071 240.5L1072.5 240.5L1074 240.5L1075.5 240.5L1077 240.5L1078.5 240.5L1080 240.5L1081.5 240.5L1083 240.5L1084.5 240.5L1086 240.5L1087.5 240.5L1089 240.5L1090.5 240.5L1092 240.5L1093.5 240.5L1095 240.5L1096.5 240.5L1098 241L1099.5 241L1101 241L1102.5 241L1104 241L1105.5 241L1107 241L1108.5 241L1110 241L1111.5 241L1113 241L1114.5 241L1116 241L1117.5 241L1119 241L1120.5 241L1122 241L1123.5 241L1125 241.5L1126.5 241.5L1128 241.5L1129.5 241.5L1131 241.5L1132.5 241.5L1134 241.5L1135.5 241.5L1137 241.5L1138.5 241.5L1140 241.5L1141.5 241.5L1143 241.5L1144.5 241.5L1146 241.5L1147.5 241.5L1149 241.5L1150.5 241.5L1152 242L1153.5 242L1155 242L1156.5 242L1158 242L1159.5 242L1161 242L1162.5 242L1164 242L1165.5 242L1167 242L1168.5 242L1170 242L1171.5 242L1173 242L1174.5 242L1176 242L1177.5 242.5L1179 242.5L1180.5 242.5L1182 242.5L1183.5 242.5L1185 243L1186.5 243L1188 243L1189.5 243L1191 243L1192.5 243L1194 243L1195.5 243L1197 243L1198.5 242.5L1200 242.5L1201.5 243L1203 243L1204.5 243L1206 243.5L1207.5 243.5L1209 243.5L1210.5 243L1212 243.5L1213.5 243.5L1215 243.5L1216.5 243.5L1218 243L1219.5 243.5L1221 243L1222.5 243L1224 243L1225.5 243L1227 243L1228.5 243L1230 243L1231.5 243.5L1233 243.5L1234.5 243.5L1236 243.5L1237.5 243.5L1239 243.5L1240.5 243.5L1242 243.5L1243.5 243.5L1245 243.5L1246.5 243.5L1248 243.5L1249.5 243.5L1251 243.5L1252.5 243.5L1254 243.5L1255.5 243.5L1257 243.5L1258.5 244L1260 244L1261.5 244L1263 244L1264.5 244L1266 244L1267.5 244L1269 244L1270.5 244L1272 244L1273.5 244L1275 244L1276.5 244L1278 244L1279.5 244L1281 244L1282.5 244L1284 244L1285.5 244.5L1287 244.5L1288.5 244.5L1290 244.5L1291.5 244.5L1293 244.5L1294.5 244.5L1296 244.5L1297.5 244.5L1299 244.5L1300.5 244.5L1302 244.5L1303.5 244.5L1305 244.5L1306.5 244.5L1308 244.5L1309.5 244.5L1311 245L1312.5 245L1314 245L1315.5 245L1317 245L1318.5 245L1320 245L1321.5 245L1323 245L1324.5 245L1326 245L1327.5 245L1329 245L1330.5 245L1332 245.5L1333.5 245.5L1335 245L1336.5 245.5L1338 245.5L1339.5 245.5L1341 246L1342.5 245.5L1344 246L1345.5 246L1347 246L1348.5 245.5L1350 246L1351.5 246L1353 245.5L1354.5 246L1356 246L1357.5 246L1359 245.5L1360.5 246L1362 246L1363.5 245.5L1365 245.5L1366.5 246L1368 246L1369.5 245.5L1371 246L1372.5 246L1374 246L1375.5 246L1377 246L1378.5 246L1380 246L1381.5 246L1383 246L1384.5 246L1386 246L1387.5 246L1389 246L1390.5 246L1392 246L1393.5 246L1395 246L1396.5 246L1398 246L1399.5 246L1401 246L1402.5 246L1404 246.5L1405.5 246.5L1407 246.5L1408.5 246.5L1410 246.5L1411.5 246.5L1413 246.5L1414.5 246.5L1416 246.5L1417.5 246.5L1419 246.5L1420.5 246.5L1422 246.5L1423.5 246.5L1425 246.5L1426.5 246.5L1428 246.5L1429.5 246.5L1431 246.5L1432.5 246.5L1434 246.5L1435.5 246.5L1437 247L1438.5 247L1440 247L1441.5 247L1443 247L1444.5 247L1446 247L1447.5 247L1449 247L1450.5 247L1452 247L1453.5 247L1455 247L1456.5 247L1458 247L1459.5 247L1461 247L1462.5 247L1464 247L1465.5 247L1467 247L1468.5 247L1470 247.5L1471.5 247.5L1473 247.5L1474.5 247.5L1476 247.5L1477.5 247.5L1479 247.5L1480.5 247.5L1482 247.5L1483.5 248L1485 247.5L1486.5 248L1488 248L1489.5 248L1491 248L1492.5 247.5L1494 247.5L1495.5 248L1497 247.5L1498.5 248L1500 248L1501.5 248L1503 248.5L1504.5 248.5L1506 248L1507.5 248.5L1509 248L1510.5 248.5L1512 248.5L1513.5 248L1515 248.5L1516.5 248L1518 248L1519.5 248L1521 248L1522.5 248L1524 248L1525.5 248L1527 248L1528.5 248L1530 248L1531.5 248L1533 248L1534.5 248L1536 248L1537.5 248.5L1539 248.5L1540.5 248.5L1542 248.5L1543.5 248.5L1545 248.5L1546.5 248.5L1548 248.5L1549.5 248.5L1551 248.5L1552.5 248.5L1554 248.5L1555.5 248.5L1557 248.5L1558.5 248.5L1560 248.5L1561.5 248.5L1563 248.5L1564.5 248.5L1566 248.5L1567.5 248.5L1569 248.5L1570.5 249L1572 249L1573.5 249L1575 249L1576.5 249L1578 249L1579.5 249L1581 249L1582.5 249L1584 249L1585.5 249L1587 249L1588.5 249L1590 249L1591.5 249L1593 249L1594.5 249L1596 249L1597.5 249L1599 249L1600.5 249L1602 249L1603.5 249.5L1605 249.5L1606.5 249.5L1608 249.5L1609.5 249.5L1611 249.5L1612.5 249.5L1614 249.5L1615.5 249.5L1617 249.5L1618.5 249.5L1620 249.5L1621.5 249.5L1623 249.5L1624.5 249.5L1626 249.5L1627.5 249.5L1629 249.5L1630.5 250L1632 250L1633.5 249.5L1635 250L1636.5 250.5L1638 250.5L1639.5 250L1641 250.5L1642.5 250L1644 250L1645.5 250L1647 250.5L1648.5 250L1650 250.5L1651.5 250L1653 250L1654.5 250.5L1656 250L1657.5 250L1659 250.5L1660.5 250L1662 250.5L1663.5 250L1665 250L1666.5 250L1668 250L1669.5 250.5L1671 250.5L1672.5 250.5L1674 250.5L1675.5 250.5L1677 250.5L1678.5 250.5L1680 250.5L1681.5 250.5L1683 250.5L1684.5 250.5L1686 250.5L1687.5 250.5L1689 250.5L1690.5 250.5L1692 250.5L1693.5 250.5L1695 250.5L1696.5 250.5L1698 250.5L1699.5 250.5L1701 250.5L1702.5 251L1704 251L1705.5 251L1707 251L1708.5 251L1710 251L1711.5 251L1713 251L1714.5 251L1716 251L1717.5 251L1719 251L1720.5 251L1722 251L1723.5 251L1725 251L1726.5 251L1728 251L1729.5 251L1731 251L1732.5 251L1734 251L1735.5 251.5L1737 251.5L1738.5 251.5L1740 251.5L1741.5 251.5L1743 251.5L1744.5 251.5L1746 251.5L1747.5 251.5L1749 251.5L1750.5 251.5L1752 251.5" fill="none" stroke="#22c2cc" stroke-width="1" stroke-linejoin="round" shape-rendering="crispEdges" />
<path d="M319.6 225.6L320.2 220.6L321 227L321.8 222L322.6 228L323.4 221.6L324.2 223L325 221L325.8 226L326.8 223L327.6 225.4L328.8 225.6L327.6 228L326.6 232L325.8 229.6L325 235.6L324.2 236.4L323.2 236L322.4 233L321.6 234.6L320.8 229L320 228Z" fill="#22c2cc" stroke="#22c2cc" stroke-width=".6"/>
<path d="M324.4 226V209.3" stroke="#22c2cc" stroke-width="1.1"/>
<path d="M439.7 222.2V239.5M438.6 226.5V231M440.8 225V233" stroke="#22c2cc" stroke-width="1.1"/>
<path d="M1251.2 228V251M1250.2 238V246M1252.3 239V247" stroke="#22c2cc" stroke-width="1.1"/>
<path d="M1341.4 245.4L1342 241L1342.6 246.6L1343.2 233L1344 231.6L1344.8 232.4L1345.4 225V231.4L1346.4 232L1347.4 231.4L1348.4 232L1348.6 226V232L1349.6 233L1350.4 240L1351 246L1351.6 243.4L1352 248.4L1352.8 246L1351 246.6L1350 244L1349 243.6L1348 245.6L1347 242L1346.2 246L1345.6 256V246L1344.6 244L1343.8 249L1343 246.4Z" fill="#22c2cc" stroke="#22c2cc" stroke-width=".7"/>
<path d="M327 354.5L328 354.5L329 354.5L330 354.5L331 354.5L332 354.5L333 353.5L334 353.5L335 354.5L336 353.5L337 353.5L338 353.5L339 353.5L340 353.5L341 354.5L342 354.5L343 353.5L344 354.5L345 353.5L346 352.5L347 353.5L348 353.5L349 352.5L350 352.5L351 352.5L352 353.5L353 352.5L354 352.5L355 352.5L356 352.5L357 352.5L358 352.5L359 352.5L360 352.5L361 351.5L362 351.5L363 351.5L364 352.5L365 352.5L366 351.5L367 351.5L368 351.5L369 351.5L370 351.5L371 351.5L372 351.5L373 352.5L374 351.5L375 352.5L376 351.5L377 351.5L378 351.5L379 351.5L380 351.5L381 351.5L382 351.5L383 351.5L384 351.5L385 351.5L386 351.5L387 351.5L388 351.5L389 351.5L390 352.5L391 352.5L392 351.5L393 350.5L394 350.5L395 351.5L396 350.5L397 350.5L398 350.5L399 350.5L400 350.5L401 350.5L402 350.5L403 350.5L404 350.5L405 350.5L406 350.5L407 350.5L408 350.5L409 350.5L410 350.5L411 350.5L412 350.5L413 350.5L414 350.5L415 350.5L416 350.5L417 350.5L418 350.5L419 350.5L420 350.5L421 350.5L422 350.5L423 350.5L424 350.5L425 350.5L426 350.5L427 350.5L428 350.5L429 350.5L430 350.5L431 350.5L432 350.5L433 350.5L434 350.5L435 350.5L436 350.5L437 350.5L438 350.5L439 350.5L440 350.5L441 350.5L442 350.5L443 350.5L444 350.5L445 350.5L446 350.5L447 350.5L448 350.5L449 350.5L450 350.5L451 350.5L452 350.5L453 350.5L454 350.5L455 350.5L456 350.5L457 350.5L458 350.5L459 350.5L460 350.5L461 350.5L462 350.5L463 350.5L464 350.5L465 350.5L466 350.5L467 350.5L468 350.5L469 350.5L470 350.5L471 350.5L472 350.5L473 350.5L474 350.5L475 350.5L476 350.5L477 350.5L478 350.5L479 350.5L480 350.5L481 350.5L482 350.5L483 350.5L484 350.5L485 350.5L486 350.5L487 350.5L488 351.5L489 351.5L490 351.5L491 351.5L492 351.5L493 351.5L494 351.5L495 351.5L496 351.5L497 351.5L498 351.5L499 351.5L500 351.5" fill="none" stroke="#e5264b" stroke-width="1" stroke-linejoin="round" shape-rendering="crispEdges" />
<path d="M500 351.5H1150M1150 350.5H1310" stroke="#e5264b" stroke-width="1" shape-rendering="crispEdges"/>
<path d="M467 351h18v2h-18zM540 350h16v2h-16zM589 351h14v2h-14zM628 350h18v2h-18zM700 350h5v2h-5zM713 351h4v2h-4zM717 350h2v3h-2zM719 350h9v3h-9zM728 350h9v3h-9zM737 350h2v3h-2zM739 350h3v2h-3zM742 350h9v3h-9zM751 350h3v3h-3zM754 350h1v2h-1zM755 350h5v3h-5zM760 350h1v2h-1zM761 350h5v2h-5zM766 351h3v2h-3zM769 350h6v3h-6zM775 350h8v3h-8zM783 350h9v3h-9zM792 351h3v2h-3zM795 350h2v3h-2zM797 351h5v2h-5zM802 350h3v3h-3zM805 350h2v3h-2zM807 351h1v2h-1zM808 350h3v3h-3zM811 351h3v2h-3zM814 351h4v2h-4zM818 351h1v2h-1zM819 350h8v3h-8zM827 350h6v3h-6zM833 350h11v3h-11zM844 350h4v3h-4zM848 351h5v2h-5zM853 350h2v3h-2zM855 350h3v3h-3zM858 350h5v3h-5zM863 350h12v3h-12zM875 350h6v3h-6zM881 351h2v2h-2zM883 350h1v2h-1zM884 350h11v3h-11zM895 350h9v3h-9zM904 350h6v3h-6zM910 350h4v3h-4zM914 350h10v3h-10zM924 350h12v3h-12zM936 351h8v2h-8zM947 350h11v3h-11zM958 350h5v3h-5zM963 351h7v2h-7zM982 351h8v2h-8zM990 350h11v3h-11zM1033 351h5v2h-5zM1052 351h8v2h-8zM1060 351h6v2h-6zM1112 351h9v2h-9zM1121 350h13v2h-13zM1157 349h9v2h-9zM1166 349h11v2h-11zM492 352h1v2h-1zM513 352h1v2h-1zM542 350h1v1h-1zM575 352h1v2h-1zM607 349h1v2h-1zM641 349h1v2h-1zM684 352h1v2h-1zM702 352h1v3h-1zM727 352h1v2h-1zM734 352h1v2h-1zM740 349h1v2h-1zM763 349h1v2h-1zM783 352h1v2h-1zM807 352h1v2h-1zM810 349h1v2h-1zM835 352h1v2h-1zM841 352h1v2h-1zM868 352h1v2h-1zM884 349h1v2h-1zM892 352h1v2h-1zM919 352h1v2h-1zM932 349h1v2h-1zM952 352h1v3h-1zM977 352h1v2h-1zM985 349h1v2h-1zM1004 349h1v2h-1zM1049 352h1v3h-1zM1055 352h1v3h-1zM1058 349h1v2h-1zM1063 352h1v2h-1zM1078 352h1v3h-1zM1098 352h1v3h-1zM1115 352h1v2h-1zM1146 352h1v2h-1zM1185 348h1v2h-1zM1218 351h1v2h-1zM1242 348h1v2h-1zM1261 351h1v2h-1zM1287 348h1v2h-1zM1290 351h1v3h-1zM1300 351h1v2h-1zM1318 351h1v3h-1z" fill="#e5264b" shape-rendering="crispEdges"/>
<path d="M3 349.5H319" stroke="#e5264b" stroke-width="1" shape-rendering="crispEdges"/>
<path d="M1309.4 349.3L1310.2 350.4L1311 351.3L1311.8 348.3L1312.6 349.9L1313.4 347.6L1314.2 351.2L1315 351.1L1315.8 351.5L1316.6 347.8L1317.4 350.1L1318.2 349.8L1319 348.1L1319.8 348.5L1320.6 352.1L1321.4 351.5L1322.2 348.7L1323 351.4L1323.8 350.6L1324.6 349.4L1325.4 350.6L1326.2 348.7L1327 348.9L1327.8 347.6L1328.6 350.6L1329.4 350.3L1330.2 351L1331 349.9L1331.8 349.6L1332.6 349L1333.4 351L1334.2 349.3L1335 350.3L1335.8 351.1L1336.6 349.6L1337.4 350.8L1338.2 347.9L1339 348.8L1339.8 351.5L1340.6 348.3" fill="none" stroke="#e5264b" stroke-width="1.1" stroke-linejoin="round" />
<path d="M54.6 349.3L54.8 352.8L55.1 339.5L55.3 363.2L55.5 329.6L55.8 364.2L56 326.3L56.2 371.7L56.5 320.3L56.7 383.9L56.9 324.5L57.2 389.9L57.4 303.9L57.6 377.7L57.9 319.4L58.1 374.8L58.3 313.7L58.6 371.2L58.8 329.3L59 365.1L59.3 334.6L59.5 362.4L59.7 341.9L60 352.5L60.2 349.3" fill="#e5264b" fill-opacity=".85" stroke="#e5264b" stroke-width="1.2"/>
<path d="M56.4 299L57.6 312L58.8 328L59.8 341L60.4 349L59.8 358L59 370L57.8 386L56.6 401L55.6 386L55.2 366L55 349L55.1 332L55.5 314Z" fill="#e5264b"/>
<path d="M318.8 352.3L319.1 353.8L319.4 350.4L319.7 356L320 348.1L320.3 360.4L320.6 346.8L320.9 364.3L321.2 342.7L321.5 364.5L321.8 338.6L322.1 371.2L322.4 341.6L322.7 369.1L323 335.3L323.3 364.7L323.6 340.1L323.9 370L324.2 338.4L324.5 362.5L324.8 343.2L325.1 360.3L325.4 343.4L325.7 358.4L326 347.3L326.3 357.5L326.6 349.9L326.9 353.8L327.2 352.3" fill="#e5264b" fill-opacity=".8" stroke="#e5264b" stroke-width="1.1"/>
<path d="M320.5 343V372L322 376L323.5 366L325.5 360L326.5 352L325.5 340L324 337L322.2 335Z" fill="#e5264b"/>
<path d="M438.4 350.1L438.7 351L439 347.9L439.4 352.3L439.7 345.4L440 353.1L440.3 343.8L440.7 355.2L441 341.2L441.3 355.4L441.6 344L442 355.2L442.3 344.9L442.6 352.4L442.9 348.2L443.3 351L443.6 350.1" fill="#e5264b" fill-opacity=".7" stroke="#e5264b" stroke-width="1.1"/>
<path d="M1249.2 350.1L1249.5 351.5L1249.8 346.8L1250.1 354L1250.4 343.7L1250.8 355.9L1251.1 342.3L1251.4 357.9L1251.7 343.6L1252 357.6L1252.3 342.6L1252.6 358.1L1252.9 341.4L1253.2 354.9L1253.6 345.5L1253.9 354.3L1254.2 347.1L1254.5 351.4L1254.8 350.1" fill="#e5264b" fill-opacity=".7" stroke="#e5264b" stroke-width="1.1"/>
<path d="M1341.5 349V376.5L1342.6 349" fill="none" stroke="#e5264b" stroke-width="1.3"/>
<path d="M1341.8 351L1342.6 332L1343.6 322L1344.2 326L1345 311L1346.5 303L1348 295.5L1349.5 292.5L1353.3 292.5L1352.6 300L1351.2 308L1350.2 316L1348.2 320L1346.4 329L1345 335L1343.8 343L1342.8 351Z" fill="#e5264b" stroke="#e5264b" stroke-width=".8"/>
<path d="M1363.2 292.5L1364.1 297.8L1365 303L1366 307.5L1367 312L1368 316L1369 320L1370 323.5L1371 327L1372 330L1373 333L1374 334.7L1375 336.3L1376 338L1377 339L1378 340L1379 341L1380 342L1381 342.9L1382 343.8L1383 344.6L1384 345.5L1385 345.9L1386 346.4L1387 346.9L1388 347.3L1389 347.5L1390 347.6L1391 347.8L1392 347.9L1393 348.1L1394 348.2L1395 348.4" fill="none" stroke="#e5264b" stroke-width="1.2" stroke-linejoin="round" />
<path d="M1395 348.5H1420M1420 349.5H1640" stroke="#e5264b" stroke-width="1" shape-rendering="crispEdges"/>
<path d="M1640.6 348.8L1641.4 349.6L1642.2 348.9L1643 349.3L1643.8 349.2L1644.6 349.6L1645.4 349.3L1646.2 349.3L1647 348.8L1647.8 349.6L1648.6 349.6L1649.4 349.4L1650.2 349.6L1651 349.4L1651.8 349.5L1652.6 349.7L1653.4 349.4L1654.2 348.8L1655 349.7L1655.8 349.8L1656.6 349L1657.4 348.9L1658.2 349.1L1659 348.9L1659.8 349.2L1660.6 348.9L1661.4 349L1662.2 348.8L1663 349.2L1663.8 349.1L1664.6 349.5L1665.4 349.2L1666.2 349L1667 349.8L1667.8 349.7L1668.6 349.5L1669.4 349L1670.2 349.2L1671 349.3L1671.8 349.2L1672.6 348.8L1673.4 349.3L1674.2 349.6L1675 349.5L1675.8 349.7L1676.6 349.5L1677.4 349.6L1678.2 349.7L1679 349.7L1679.8 349.6L1680.6 349.2L1681.4 349.5L1682.2 349.5L1683 349.7L1683.8 349.5L1684.6 349.2L1685.4 349L1686.2 349.1L1687 349.1L1687.8 349.5L1688.6 349.6L1689.4 349L1690.2 349.3L1691 349.6L1691.8 349.2L1692.6 348.9L1693.4 349.4L1694.2 349.2L1695 348.9L1695.8 349.1L1696.6 348.8L1697.4 348.9L1698.2 349.2L1699 348.9L1699.8 348.8L1700.6 349.3L1701.4 349.8L1702.2 349.6L1703 349.1L1703.8 349.7L1704.6 348.9L1705.4 349L1706.2 348.8L1707 348.9L1707.8 349.4L1708.6 349.6L1709.4 349.3L1710.2 349.6L1711 349.3L1711.8 349.7L1712.6 349.4L1713.4 349.3L1714.2 349L1715 349.2L1715.8 349.2L1716.6 349.6L1717.4 349L1718.2 349.1L1719 349.6L1719.8 348.9L1720.6 349.3L1721.4 349L1722.2 349.5L1723 349.4L1723.8 348.9L1724.6 349.5L1725.4 349.2L1726.2 349.1L1727 349.7L1727.8 349.6L1728.6 349.1L1729.4 349.5L1730.2 348.9L1731 349.3L1731.8 348.9L1732.6 349.4L1733.4 349.7L1734.2 349.4L1735 348.8L1735.8 349.3L1736.6 349.3L1737.4 349.2L1738.2 349L1739 349.1L1739.8 349.2L1740.6 348.9L1741.4 349.5L1742.2 349L1743 349.1L1743.8 348.9L1744.6 349.1L1745.4 349.7L1746.2 349.1L1747 348.9L1747.8 349.1L1748.6 349.7L1749.4 348.9L1750.2 349.1L1751 349L1751.8 349.5" fill="none" stroke="#e5264b" stroke-width="1.1" stroke-linejoin="round" />
<path d="M3 477.5L4 477.5L5 477.5L6 477.5L7 477.5L8 477.5L9 477.5L10 477.5L11 477.5L12 477.5L13 477.5L14 477.5L15 477.5L16 477.5L17 477.5L18 477.5L19 477.5L20 477.5L21 477.5L22 477.5L23 477.5L24 477.5L25 477.5L26 477.5L27 477.5L28 477.5L29 477.5L30 477.5L31 477.5L32 477.5L33 477.5L34 477.5L35 477.5L36 477.5L37 477.5L38 477.5L39 477.5L40 477.5L41 477.5L42 477.5L43 477.5L44 477.5L45 477.5L46 477.5L47 477.5L48 477.5L49 477.5L50 477.5L51 477.5L52 477.5L53 477.5L54 477.5L55 477.5L56 477.5L57 477.5L58 477.5L59 477.5L60 477.5L61 477.5L62 477.5L63 477.5L64 477.5L65 477.5L66 477.5L67 477.5L68 477.5L69 477.5L70 477.5L71 477.5L72 477.5L73 477.5L74 477.5L75 477.5L76 477.5L77 477.5L78 477.5L79 477.5L80 477.5L81 477.5L82 477.5L83 477.5L84 477.5L85 477.5L86 477.5L87 477.5L88 477.5L89 477.5L90 477.5L91 477.5L92 477.5L93 477.5L94 477.5L95 477.5L96 477.5L97 477.5L98 477.5L99 477.5L100 477.5L101 477.5L102 477.5L103 477.5L104 477.5L105 477.5L106 477.5L107 477.5L108 477.5L109 477.5L110 477.5L111 477.5L112 477.5L113 477.5L114 477.5L115 477.5L116 477.5L117 477.5L118 477.5L119 477.5L120 477.5L121 477.5L122 477.5L123 477.5L124 477.5L125 477.5L126 477.5L127 477.5L128 477.5L129 477.5L130 477.5L131 477.5L132 477.5L133 477.5L134 477.5L135 477.5L136 477.5L137 477.5L138 477.5L139 477.5L140 477.5L141 477.5L142 477.5L143 477.5L144 477.5L145 477.5L146 477.5L147 477.5L148 477.5L149 477.5L150 477.5L151 477.5L152 477.5L153 477.5L154 477.5L155 477.5L156 477.5L157 477.5L158 477.5L159 477.5L160 477.5L161 477.5L162 477.5L163 477.5L164 477.5L165 477.5L166 477.5L167 477.5L168 477.5L169 477.5L170 477.5L171 477.5L172 477.5L173 477.5L174 477.5L175 477.5L176 477.5L177 477.5L178 477.5L179 477.5L180 477.5L181 477.5L182 477.5L183 477.5L184 477.5L185 477.5L186 477.5L187 477.5L188 477.5L189 477.5L190 477.5L191 477.5L192 477.5L193 477.5L194 477.5L195 477.5L196 477.5L197 477.5L198 477.5L199 477.5L200 477.5L201 477.5L202 477.5L203 477.5L204 477.5L205 477.5L206 477.5L207 477.5L208 477.5L209 477.5L210 477.5L211 477.5L212 477.5L213 477.5L214 477.5L215 477.5L216 477.5L217 477.5L218 477.5L219 477.5L220 477.5L221 477.5L222 477.5L223 477.5L224 477.5L225 477.5L226 477.5L227 477.5L228 477.5L229 477.5L230 477.5L231 477.5L232 477.5L233 477.5L234 477.5L235 477.5L236 477.5L237 477.5L238 477.5L239 477.5L240 477.5L241 477.5L242 477.5L243 477.5L244 477.5L245 477.5L246 477.5L247 477.5L248 477.5L249 477.5L250 477.5L251 477.5L252 477.5L253 477.5L254 477.5L255 477.5L256 477.5L257 477.5L258 477.5L259 477.5L260 477.5L261 477.5L262 477.5L263 477.5L264 477.5L265 477.5L266 477.5L267 477.5L268 477.5L269 477.5L270 477.5L271 477.5L272 477.5L273 477.5L274 477.5L275 477.5L276 477.5L277 477.5L278 477.5L279 477.5L280 477.5L281 477.5L282 477.5L283 477.5L284 477.5L285 477.5L286 477.5L287 477.5L288 477.5L289 477.5L290 477.5L291 477.5L292 477.5L293 477.5L294 477.5L295 477.5L296 477.5L297 477.5L298 477.5L299 477.5L300 477.5L301 477.5L302 477.5L303 477.5L304 477.5L305 477.5L306 477.5L307 477.5L308 477.5L309 477.5L310 477.5L311 477.5L312 477.5L313 477.5L314 477.5L315 477.5L316 477.5L317 477.5L318 477.5L319 477.5L320 477.5L321 477.5L322 477.5L323 477.5L324 477.5L325 477.5L326 477.5L327 477.5L328 477.5L329 477.5L330 477.5L331 477.5L332 477.5L333 477.5L334 477.5L335 477.5L336 477.5L337 477.5L338 477.5L339 477.5L340 477.5L341 477.5L342 477.5L343 477.5L344 477.5L345 477.5L346 477.5L347 477.5L348 477.5L349 477.5L350 477.5L351 477.5L352 477.5L353 477.5L354 477.5L355 477.5L356 477.5L357 477.5L358 477.5L359 477.5L360 477.5L361 477.5L362 477.5L363 477.5L364 477.5L365 477.5L366 477.5L367 477.5L368 477.5L369 477.5L370 477.5L371 477.5L372 477.5L373 477.5L374 477.5L375 477.5L376 477.5L377 477.5L378 477.5L379 477.5L380 477.5L381 477.5L382 477.5L383 477.5L384 477.5L385 477.5L386 477.5L387 477.5L388 477.5L389 477.5L390 477.5L391 477.5L392 477.5L393 477.5L394 477.5L395 477.5L396 477.5L397 477.5L398 477.5L399 477.5L400 477.5L401 477.5L402 477.5L403 477.5L404 477.5L405 477.5L406 477.5L407 477.5L408 477.5L409 477.5L410 477.5L411 477.5L412 477.5L413 477.5L414 477.5L415 477.5L416 477.5L417 477.5L418 477.5L419 477.5L420 477.5L421 477.5L422 477.5L423 477.5L424 477.5L425 477.5L426 477.5L427 477.5L428 477.5L429 477.5L430 477.5L431 477.5L432 477.5L433 477.5L434 477.5L435 477.5L436 477.5L437 477.5L438 477.5L439 477.5L440 477.5L441 477.5L442 477.5L443 477.5L444 477.5L445 477.5L446 477.5L447 477.5L448 477.5L449 477.5L450 477.5L451 477.5L452 477.5L453 477.5L454 477.5L455 477.5L456 477.5L457 477.5L458 477.5L459 477.5L460 477.5L461 477.5L462 477.5L463 477.5L464 477.5L465 477.5L466 477.5L467 477.5L468 477.5L469 477.5L470 477.5L471 477.5L472 477.5L473 477.5L474 477.5L475 477.5L476 477.5L477 477.5L478 477.5L479 477.5L480 477.5L481 477.5L482 477.5L483 477.5L484 477.5L485 477.5L486 477.5L487 477.5L488 477.5L489 477.5L490 477.5L491 477.5L492 477.5L493 477.5L494 477.5L495 477.5L496 477.5L497 477.5L498 477L499 477L500 477L501 476.5L502 476.5L503 476L504 475.5L505 475.5L506 475L507 474.5L508 474.5L509 474L510 473.5L511 473L512 473L513 472.5L514 472L515 471.5L516 471L517 471L518 470.5L519 470L520 469.5L521 469L522 468.5L523 468.5L524 468L525 467.5L526 467L527 466.5L528 466L529 465.5L530 465L531 465L532 464.5L533 464L534 463.5L535 463L536 462.5L537 462L538 461.5L539 461L540 460.5L541 460L542 460L543 459.5L544 459L545 458.5L546 458L547 457.5L548 457L549 457L550 456.5L551 456L552 456L553 455.5L554 455L555 455L556 454.5L557 454.5L558 454L559 454L560 453.5L561 453.5L562 453L563 453L564 453L565 452.5L566 452.5L567 452L568 452L569 452L570 451.5L571 451.5L572 451.5L573 451L574 451L575 451L576 450.5L577 450.5L578 450.5L579 450L580 450L581 450L582 450L583 450L584 449.5L585 449.5L586 449.5L587 449.5L588 449.5L589 449L590 449L591 449L592 449L593 449L594 449L595 449L596 449L597 449L598 448.5L599 448.5L600 448.5L601 448.5L602 448.5L603 448.5L604 448.5L605 448.5L606 448.5L607 448.5L608 448.5L609 448.5L610 448L611 448L612 448L613 448L614 448L615 448L616 448L617 448L618 448L619 448L620 448L621 448L622 448L623 448L624 448L625 448L626 448L627 448.5L628 448.5L629 448.5L630 448.5L631 448.5L632 448.5L633 448.5L634 448.5L635 448.5L636 448.5L637 448.5L638 448.5L639 448.5L640 448.5L641 448.5L642 448.5L643 449L644 449L645 449L646 449L647 449L648 449L649 449L650 449L651 449L652 449L653 449L654 449L655 449L656 449L657 449.5L658 449.5L659 449.5L660 449.5L661 449.5L662 449.5L663 449.5L664 449.5L665 449.5L666 449.5L667 449.5L668 449.5L669 450L670 450L671 450L672 450L673 450L674 450L675 450L676 450L677 450L678 450L679 450L680 450L681 450L682 450L683 450.5L684 450.5L685 450.5L686 450.5L687 450.5L688 450.5L689 450.5L690 450.5L691 450.5L692 450.5L693 450.5L694 450.5L695 450.5L696 450.5L697 450.5L698 450.5L699 451L700 451L701 451L702 451L703 451L704 451L705 451L706 451L707 451L708 451L709 451L710 451L711 451L712 451L713 451L714 451L715 451L716 451.5L717 451.5L718 451.5L719 451.5L720 451.5L721 451.5L722 451.5L723 451.5L724 451.5L725 451.5L726 451.5L727 451.5L728 451.5L729 451.5L730 451.5L731 451.5L732 452L733 452L734 452L735 452L736 452L737 452L738 452L739 452L740 452L741 452L742 452L743 452L744 452.5L745 452.5L746 452.5L747 452.5L748 452.5L749 452.5L750 452.5L751 452.5L752 452.5L753 452.5L754 452.5L755 452.5L756 452.5L757 453L758 453L759 453L760 453L761 453L762 453L763 453L764 453L765 453L766 453L767 453L768 453L769 453L770 453L771 453L772 453.5L773 453.5L774 453.5L775 453.5L776 453.5L777 453.5L778 453.5L779 453.5L780 453.5L781 453.5L782 453.5L783 453.5L784 453.5L785 453.5L786 453.5L787 454L788 454L789 454L790 454L791 454L792 454L793 454L794 454L795 454L796 454L797 454L798 454L799 454L800 454L801 454L802 454.5L803 454.5L804 454.5L805 454.5L806 454.5L807 454.5L808 454.5L809 454.5L810 454.5L811 454.5L812 454.5L813 454.5L814 454.5L815 454.5L816 455L817 455L818 455L819 455L820 455L821 455L822 455L823 455L824 455L825 455L826 455L827 455L828 455L829 455L830 455.5L831 455.5L832 455.5L833 455.5L834 455.5L835 455.5L836 455.5L837 455.5L838 455.5L839 455.5L840 455.5L841 455.5L842 455.5L843 455.5L844 456L845 456L846 456L847 456L848 456L849 456L850 456L851 456L852 456L853 456L854 456L855 456L856 456L857 456.5L858 456.5L859 456.5L860 456.5L861 456.5L862 456.5L863 456.5L864 456.5L865 456.5L866 456.5L867 456.5L868 456.5L869 457L870 457L871 457L872 457L873 457L874 457L875 457L876 457L877 457L878 457L879 457L880 457L881 457L882 457.5L883 457.5L884 457.5L885 457.5L886 457.5L887 457.5L888 457.5L889 457.5L890 457.5L891 457.5L892 457.5L893 457.5L894 457.5L895 457.5L896 457.5L897 457.5L898 458L899 458L900 458L901 458L902 458L903 458L904 458L905 458L906 458L907 458L908 458L909 458L910 458L911 458L912 458L913 458.5L914 458.5L915 458.5L916 458.5L917 458.5L918 458.5L919 458.5L920 458.5L921 458.5L922 458.5L923 458.5L924 458.5L925 458.5L926 458.5L927 458.5L928 458.5L929 459L930 459L931 459L932 459L933 459L934 459L935 459L936 459L937 459L938 459L939 459L940 459L941 459L942 459L943 459L944 459L945 459L946 459L947 459L948 459L949 459L950 459.5L951 459.5L952 459.5L953 459.5L954 459.5L955 459.5L956 459.5L957 459.5L958 459.5L959 459.5L960 459.5L961 459.5L962 459.5L963 459.5L964 459.5L965 459.5L966 459.5L967 459.5L968 459.5L969 459.5L970 459.5L971 460L972 460L973 460L974 460L975 460L976 460L977 460L978 460L979 460L980 460L981 460L982 460L983 460L984 460L985 460L986 460L987 460L988 460L989 460L990 460L991 460L992 460L993 460L994 460L995 460L996 460L997 460L998 460L999 459.5L1000 459L1001 459L1002 459L1003 459L1004 459L1005 459L1006 459L1007 459L1008 459L1009 459.5L1010 460L1011 460L1012 460L1013 460L1014 460.5L1015 460.5L1016 460.5L1017 460.5L1018 460.5L1019 460.5L1020 460.5L1021 460.5L1022 460.5L1023 460.5L1024 460.5L1025 460.5L1026 460.5L1027 460.5L1028 460.5L1029 460.5L1030 460.5L1031 460.5L1032 460.5L1033 460.5L1034 460.5L1035 460.5L1036 460.5L1037 460.5L1038 460.5L1039 460.5L1040 460.5L1041 460.5L1042 461L1043 461L1044 461L1045 461L1046 461L1047 461L1048 461L1049 461.5L1050 461.5L1051 461.5L1052 461.5L1053 461.5L1054 461.5L1055 462L1056 462L1057 462L1058 462L1059 462.5L1060 462.5L1061 462.5L1062 462.5L1063 462.5L1064 463L1065 463L1066 463L1067 463L1068 463.5L1069 463.5L1070 463.5L1071 463.5L1072 463.5L1073 463.5L1074 463.5L1075 463.5L1076 464L1077 464L1078 464L1079 464L1080 464L1081 464L1082 464L1083 464L1084 464L1085 464L1086 464L1087 464L1088 464.5L1089 464.5L1090 464.5L1091 464.5L1092 464.5L1093 464.5L1094 464.5L1095 464.5L1096 464.5L1097 464.5L1098 464.5L1099 464.5L1100 464.5L1101 464.5L1102 464.5L1103 464.5L1104 464.5L1105 464.5L1106 464.5L1107 464.5L1108 464.5L1109 464.5L1110 464.5L1111 464.5L1112 464.5L1113 464.5L1114 464.5L1115 464.5L1116 464.5L1117 464.5L1118 464.5L1119 464.5L1120 464.5L1121 464.5L1122 464.5L1123 464.5L1124 464.5L1125 464.5L1126 464.5L1127 464.5L1128 464.5L1129 464.5L1130 464.5L1131 464.5L1132 464.5L1133 464.5L1134 464.5L1135 464.5L1136 464.5L1137 464.5L1138 464.5L1139 464.5L1140 464.5L1141 464.5L1142 464L1143 464L1144 464L1145 464L1146 464L1147 464L1148 463.5L1149 463.5L1150 463.5L1151 463.5L1152 463.5L1153 463.5L1154 463.5L1155 463.5L1156 463.5L1157 463.5L1158 463.5L1159 463.5L1160 463.5L1161 463.5L1162 463.5L1163 463.5L1164 463.5L1165 463.5L1166 463.5L1167 463.5L1168 463.5L1169 463.5L1170 463.5L1171 463.5L1172 463.5L1173 463.5L1174 463.5L1175 463L1176 463L1177 463L1178 463.5L1179 463.5L1180 463.5L1181 463.5L1182 463.5L1183 463.5L1184 463.5L1185 463.5L1186 463.5L1187 463.5L1188 463.5L1189 463.5L1190 463.5L1191 463.5L1192 463.5L1193 463.5L1194 463.5L1195 463.5L1196 463.5L1197 463.5L1198 463.5L1199 463.5L1200 463.5L1201 463.5L1202 463.5L1203 463.5L1204 463.5L1205 463.5L1206 463.5L1207 463.5L1208 463.5L1209 463.5L1210 463.5L1211 463.5L1212 463.5L1213 463L1214 463L1215 463L1216 463L1217 463L1218 463L1219 463L1220 463L1221 463L1222 463L1223 463L1224 463L1225 463L1226 463L1227 463L1228 463L1229 463L1230 463L1231 463L1232 463L1233 463L1234 463L1235 463L1236 463L1237 463L1238 462.5L1239 462.5L1240 462.5L1241 462.5L1242 462.5L1243 462.5L1244 462.5L1245 462.5L1246 462.5L1247 462.5L1248 462.5L1249 462.5L1250 462.5L1251 462.5L1252 462.5L1253 462.5L1254 462.5L1255 462.5L1256 462.5L1257 462.5L1258 462.5L1259 462.5L1260 462L1261 462L1262 462L1263 462L1264 462L1265 462L1266 462.5L1267 462.5L1268 462.5L1269 462.5L1270 462.5L1271 462.5L1272 462.5L1273 462.5L1274 462.5L1275 462.5L1276 462.5L1277 462.5L1278 462.5L1279 462.5L1280 462.5L1281 462.5L1282 462.5L1283 462.5L1284 462.5L1285 462.5L1286 462.5L1287 462.5L1288 462.5L1289 462.5L1290 462.5L1291 462.5L1292 462.5L1293 462.5L1294 462.5L1295 462.5L1296 462.5L1297 462.5L1298 462.5L1299 462.5L1300 462.5L1301 462.5L1302 462.5L1303 463L1304 463L1305 463.5L1306 463.5L1307 463.5L1308 463.5L1309 463.5L1310 463.5L1311 463.5L1312 463.5L1313 463.5L1314 462.5L1315 462.5L1316 462.5L1317 462.5L1318 462.5L1319 462.5L1320 462.5L1321 462.5L1322 462.5L1323 462.5L1324 462.5L1325 462.5L1326 462.5L1327 462.5L1328 462.5L1329 462.5L1330 462.5L1331 462.5L1332 462.5L1333 462.5L1334 462.5L1335 462.5L1336 462.5L1337 462.5L1338 462.5L1339 462.5L1340 462.5L1341 462.5L1342 462.5L1342.8 460L1343.5 458L1344.5 455L1345.5 452L1346.5 447L1347.2 444.5L1348 442L1348.8 441L1349.5 440.5L1350.5 440.5L1351.5 440.5L1352.5 440.5L1353.6 441L1354.8 441.5L1355.9 442L1357 442.5L1358 443L1359 443.5L1360 444L1361 444.5L1362 445L1363 446L1364 446.5L1365 447L1366 448L1367 449L1368 450L1369 450.5L1370 451.5L1371 452L1372 453L1373 453.5L1374 454.5L1375 455L1376 455.5L1377 456.5L1378 457L1379 458L1380 458.5L1381 459L1382 459.5L1383 460.5L1384 461L1385 461.5L1386 462L1387 462.5L1388 463L1389 463.5L1390 464L1391 464.5L1392 465L1393 465L1394 465.5L1395 466L1396 466.5L1397 467L1398 467L1399 467.5L1400 468L1401 468L1402 468.5L1403 469L1404 469L1405 469L1406 469.5L1407 470L1408 470L1409 470L1410 470.5L1411 470.5L1412 471L1413 471L1414 471.5L1415 471.5L1416 471.5L1417 472L1418 472L1419 472.5L1420 472.5L1421 472.5L1422 473L1423 473L1424 473L1425 473L1426 473.5L1427 473.5L1428 473.5L1429 474L1430 474L1431 474L1432 474.5L1433 474.5L1434 474.5L1435 474.5L1436 475L1437 475L1438 475L1439 475L1440 475.5L1441 475.5L1442 475.5L1443 475.5L1444 475.5L1445 476L1446 476L1447 476L1448 476L1449 476L1450 476L1451 476L1452 476.5L1453 476.5L1454 476.5L1455 476.5L1456 476.5L1457 476.5L1458 476.5L1459 476.5L1460 476.5L1461 476.5L1462 476.5L1463 476.5L1464 476.5L1465 476.5L1466 476.5L1467 476.5L1468 476.5L1469 476.5L1470 477L1471 477L1472 477L1473 477L1474 477L1475 477L1476 477L1477 477L1478 477L1479 477L1480 477L1481 477L1482 477L1483 477L1484 477L1485 477L1486 477L1487 477L1488 477L1489 477L1490 477L1491 477.5L1492 477.5L1493 477.5L1494 477.5L1495 477.5L1496 477.5L1497 477.5L1498 477.5L1499 477.5L1500 477.5L1501 477.5L1502 477.5L1503 477.5L1504 477.5L1505 477.5L1506 477.5L1507 477.5L1508 477.5L1509 477.5L1510 477.5L1511 477.5L1512 477.5L1513 477.5L1514 477.5L1515 477.5L1516 477.5L1517 477.5L1518 477.5L1519 477.5L1520 477.5L1521 477.5L1522 477.5L1523 477.5L1524 477.5L1525 477.5L1526 477.5L1527 477.5L1528 477.5L1529 477.5L1530 477.5L1531 477.5L1532 477.5L1533 477.5L1534 477.5L1535 477.5L1536 477.5L1537 477.5L1538 477.5L1539 477.5L1540 477.5L1541 477.5L1542 477.5L1543 477.5L1544 477.5L1545 477.5L1546 477.5L1547 477.5L1548 477.5L1549 477.5L1550 477.5L1551 477.5L1552 477.5L1553 477.5L1554 477.5L1555 477.5L1556 477.5L1557 477.5L1558 477.5L1559 477.5L1560 477.5L1561 477.5L1562 477.5L1563 477.5L1564 477.5L1565 477.5L1566 477.5L1567 477.5L1568 477.5L1569 477.5L1570 477.5L1571 477.5L1572 477.5L1573 477.5L1574 477.5L1575 477.5L1576 477.5L1577 477.5L1578 477.5L1579 477.5L1580 477.5L1581 477.5L1582 477.5L1583 477.5L1584 477.5L1585 477.5L1586 477.5L1587 477.5L1588 477.5L1589 477.5L1590 477.5L1591 477.5L1592 477.5L1593 477.5L1594 477.5L1595 477.5L1596 477.5L1597 477.5L1598 477.5L1599 477.5L1600 477.5L1601 477.5L1602 477.5L1603 477.5L1604 477.5L1605 477.5L1606 477.5L1607 477.5L1608 477.5L1609 477.5L1610 477.5L1611 477.5L1612 477.5L1613 477.5L1614 477.5L1615 477.5L1616 477.5L1617 477.5L1618 477.5L1619 477.5L1620 477.5L1621 477.5L1622 477.5L1623 477.5L1624 477.5L1625 477.5L1626 477.5L1627 477.5L1628 477.5L1629 477.5L1630 477.5L1631 477.5L1632 477.5L1633 477.5L1634 477.5L1635 477.5L1636 477.5L1637 477.5L1638 477.5L1639 477.5L1640 477.5L1641 477.5L1642 477.5L1643 477.5L1644 477.5L1645 477.5L1646 477.5L1647 477.5L1648 477.5L1649 477.5L1650 477.5L1651 477.5L1652 477.5L1653 477.5L1654 477.5L1655 477.5L1656 477.5L1657 477.5L1658 477.5L1659 477.5L1660 477.5L1661 477.5L1662 477.5L1663 477.5L1664 477.5L1665 477.5L1666 477.5L1667 477.5L1668 477.5L1669 477.5L1670 477.5L1671 477.5L1672 477.5L1673 477.5L1674 477.5L1675 477.5L1676 477.5L1677 477.5L1678 477.5L1679 477.5L1680 477.5L1681 477.5L1682 477.5L1683 477.5L1684 477.5L1685 477.5L1686 477.5L1687 477.5L1688 477.5L1689 477.5L1690 477.5L1691 477.5L1692 477.5L1693 477.5L1694 477.5L1695 477.5L1696 477.5L1697 477.5L1698 477.5L1699 477.5L1700 477.5L1701 477.5L1702 477.5L1703 477.5L1704 477.5L1705 477.5L1706 477.5L1707 477.5L1708 477.5L1709 477.5L1710 477.5L1711 477.5L1712 477.5L1713 477.5L1714 477.5L1715 477.5L1716 477.5L1717 477.5L1718 477.5L1719 477.5L1720 477.5L1721 477.5L1722 477.5L1723 477.5L1724 477.5L1725 477.5L1726 477.5L1727 477.5L1728 477.5L1729 477.5L1730 477.5L1731 477.5L1732 477.5L1733 477.5L1734 477.5L1735 477.5L1736 477.5L1737 477.5L1738 477.5L1739 477.5L1740 477.5L1741 477.5L1742 477.5L1743 477.5L1744 477.5L1745 477.5L1746 477.5L1747 477.5L1748 477.5L1749 477.5L1750 477.5L1751 477.5L1752 477.5" fill="none" stroke="#78c31f" stroke-width="1" stroke-linejoin="round" shape-rendering="crispEdges" />
<path d="M3 583.5H1752" stroke="#f7931e" stroke-width="1.2" shape-rendering="crispEdges"/>
<clipPath id="c6clip"><rect x="3" y="643" width="1750" height="116"/></clipPath>
<path d="M3 745.5L38 745.5L40 744.5L54.6 744.5L55.2 654.3L318 654.3L319.5 653L321.2 653.6L321.6 640L326.4 640L326.8 647.5L327.6 649L328 653L330 654.3L333 653.4L336 654.3L339.5 653.3L340 654.3L436.5 654.3L438.2 652L439 646L439.6 644L440.6 646L441.2 649L442.2 650L442.8 653.6L444 654.3L1250.4 654.3L1250.8 644L1250.8 640L1255.2 640L1255.6 646L1256.4 648L1256.8 650.5L1257.6 651L1257.8 654.3L1341 654.3L1342.4 652.5L1343.4 648L1344.4 644.6L1345 640L1350.6 640L1351.2 646L1352.2 649L1353 652L1353.8 654.3L1752 654.3" fill="none" stroke="#2020bc" stroke-width="1" stroke-linejoin="round" shape-rendering="crispEdges" stroke-linejoin="miter" clip-path="url(#c6clip)"/>
<path d="M321.9 644V650M322.7 644V649M1346.6 643.5V646.6M1347.6 643.5V647.2" stroke="#2020bc" stroke-width="1"/>
<path d="M55 863.6L56 863.6L56 862.5L65 862.5L65 861.3L73 861.3L73 860.2L81 860.2L81 859L90 859L90 857.9L98 857.9L98 856.7L107 856.7L107 855.6L115 855.6L115 854.4L124 854.4L124 853.3L133 853.3L133 852.1L141 852.1L141 851L150 851L150 849.8L159 849.8L159 848.7L168 848.7L168 847.5L177 847.5L177 846.4L186 846.4L186 845.2L195 845.2L195 844.1L205 844.1L205 842.9L214 842.9L214 841.8L223 841.8L223 840.6L233 840.6L233 839.5L242 839.5L242 838.3L252 838.3L252 837.2L261 837.2L261 836L271 836L271 834.9L281 834.9L281 833.7L291 833.7L291 832.6L301 832.6L301 831.4L311 831.4L311 830.3L321 830.3L321 829.1L332 829.1L332 828L342 828L342 826.8L353 826.8L353 825.7L363 825.7L363 824.5L374 824.5L374 823.4L385 823.4L385 822.2L396 822.2L396 821.1L407 821.1L407 819.9L418 819.9L418 818.8L430 818.8L430 817.6L441 817.6L441 816.5L453 816.5L453 815.3L465 815.3L465 814.2L477 814.2L477 813L489 813L489 811.9L501 811.9L501 810.7L514 810.7L514 809.6L527 809.6L527 808.4L539 808.4L539 807.3L553 807.3L553 806.1L566 806.1L566 805L579 805L579 803.8L593 803.8L593 802.7L607 802.7L607 801.5L622 801.5L622 800.4L636 800.4L636 799.2L651 799.2L651 798.1L666 798.1L666 796.9L682 796.9L682 795.8L698 795.8L698 794.6L714 794.6L714 793.5L731 793.5L731 792.3L748 792.3L748 791.2L766 791.2L766 790L784 790L784 788.9L803 788.9L803 787.7L822 787.7L822 786.6L842 786.6L842 785.4L863 785.4L863 784.3L885 784.3L885 783.1L908 783.1L908 782L932 782L932 780.8L957 780.8L957 779.7L984 779.7L984 778.5L1012 778.5L1012 777.4L1043 777.4L1043 776.2L1078 776.2L1078 775.1L1116 775.1L1116 773.9L1159 773.9L1159 772.8L1212 772.8L1212 771.6L1285 771.6L1285 770.5L1350 770.5L1352 770.4L1435 770.4L1436 771.4L1529 771.4L1531 772.5L1587 772.5L1589 773.7L1633 773.7L1635 774.8L1680 775.4L1720 776.2L1742 776.6L1744 777.3L1752 777.3" fill="none" stroke="#ee8c1c" stroke-width="1" stroke-linejoin="round" shape-rendering="crispEdges" />
<path d="M38 863.5H55" stroke="#ee8c1c" stroke-width="1" shape-rendering="crispEdges"/>
<path d="M3 902.5L3.5 902.5L4 902.3L4.5 902.3L5 902.5L5.5 902.3L6 902.1L6.5 902.2L7 902.1L7.5 902.3L8 902.1L8.5 902.4L9 902.5L9.5 902.3L10 902.5L10.5 902.8L11 902.3L11.5 902.5L12 902.6L12.5 902.5L13 902.4L13.5 902.6L14 902.8L14.5 902.5L15 902.8L15.5 902.9L16 902.6L16.5 902.6L17 902.8L17.5 902.7L18 903L18.5 902.6L19 902.6L19.5 903L20 903.1L20.5 902.7L21 902.5L21.5 903.1L22 903.2L22.5 902.9L23 903L23.5 903.2L24 903.1L24.5 902.7L25 903.4L25.5 902.9L26 903L26.5 903.1L27 903L27.5 903L28 902.9L28.5 902.9L29 903L29.5 903.4L30 903.1L30.5 903.1L31 903.1L31.5 903.5L32 903.6L32.5 903.5L33 903.2L33.5 903.1L34 903.4L34.5 903.7L35 903.1L35.5 903.2L36 903.3L36.5 903.6L37 903.7L37.5 903.3L38 903.3L38.5 903.5L39 903.9L39.5 903.4L40 903.7L40.5 903.9L41 903.3L41.5 903.9L42 903.8L42.5 903.4L43 903.9L43.5 903.8L44 903.9L44.5 903.9L45 904L45.5 904L46 904.1L46.5 904.1L47 904L47.5 904.2L48 904.1L48.5 904.2L49 903.7L49.5 904L50 904.1L50.5 904.2L51 904.2L51.5 904.4L52 904L52.5 904.3L53 904L53.5 904.1L54 904L54.6 905.1L55 895.5L55.5 912.8L56 898.9L56.6 908L57 905.4L57.4 902.4L57.9 903.9L58.4 905.8L58.9 905.1L59.5 904.5L60 903.8L60.5 903.8L61 904.5L61.5 904.9L62 904.7L62.5 904.6L63 904.7L63.5 904.7L64 904.2L64.5 904.3L65 904L65.5 904.4L66 903.7L66.5 904.1L67 903.9L67.5 904.2L68 903.9L68.5 904.3L69 904.5L69.5 904.3L70 904.3L70.5 904L71 904.5L71.5 904.4L72 904.2L72.5 904.6L73 904L73.5 904.2L74 904.4L74.5 904.4L75 904.2L75.5 904.1L76 904.1L76.5 904.4L77 904.2L77.5 904.8L78 904.5L78.5 904.2L79 904.7L79.5 904.3L80 904.6L80.5 904.4L81 904.7L81.5 904.8L82 904.7L82.5 905L83 904.7L83.5 904.7L84 904.5L84.5 904.5L85 904.8L85.5 904.7L86 904.9L86.5 905.1L87 904.5L87.5 904.6L88 905.2L88.5 905L89 904.7L89.5 904.6L90 905.2L90.5 904.9L91 905.4L91.5 905.1L92 905L92.5 905.1L93 905.1L93.5 904.9L94 905.4L94.5 905.2L95 905.5L95.5 905.5L96 905L96.5 905.4L97 905.6L97.5 905.5L98 905.5L98.5 905L99 905.5L99.5 905.5L100 905.4L100.5 905.2L101 905.3L101.5 905.7L102 905.4L102.5 905.2L103 905.3L103.5 905.2L104 905.2L104.5 905.3L105 905.7L105.5 905.6L106 905.3L106.5 905.9L107 905.9L107.5 905.6L108 905.9L108.5 905.6L109 905.8L109.5 905.5L110 906.1L110.5 905.5L111 905.9L111.5 906.1L112 905.7L112.5 905.5L113 905.8L113.5 906.1L114 905.8L114.5 906.2L115 905.8L115.5 905.7L116 906L116.5 905.7L117 906L117.5 905.8L118 906.3L118.5 906.2L119 906.3L119.5 906.1L120 906.1L120.5 906.1L121 905.9L121.5 906.4L122 906L122.5 906.4L123 905.9L123.5 906.5L124 906L124.5 905.9L125 906.2L125.5 906.7L126 906.6L126.5 906.3L127 906.7L127.5 906.6L128 906.4L128.5 906.2L129 906.4L129.5 906.1L130 906.3L130.5 906.4L131 906.2L131.5 906.3L132 906.3L132.5 906.4L133 906.4L133.5 906.9L134 906.7L134.5 906.7L135 906.5L135.5 906.5L136 907L136.5 907L137 906.5L137.5 906.8L138 906.9L138.5 906.4L139 907.1L139.5 907.1L140 906.8L140.5 906.5L141 906.5L141.5 907.1L142 907.2L142.5 906.7L143 906.9L143.5 907.2L144 906.8L144.5 907L145 907.2L145.5 906.9L146 906.8L146.5 907.2L147 907.1L147.5 907.2L148 907L148.5 907.3L149 907.3L149.5 907.2L150 907.4L150.5 906.9L151 907.6L151.5 907.6L152 907.3L152.5 907.6L153 907.5L153.5 907.7L154 907.6L154.5 907.7L155 907.1L155.5 907.1L156 907.6L156.5 907.3L157 907.1L157.5 907.4L158 907.7L158.5 907.8L159 907.6L159.5 907.8L160 907.8L160.5 907.4L161 907.4L161.5 907.4L162 907.9L162.5 907.8L163 907.8L163.5 907.5L164 907.8L164.5 908L165 907.4L165.5 907.6L166 907.6L166.5 907.5L167 908.1L167.5 908L168 908L168.5 907.9L169 907.8L169.5 907.9L170 908.2L170.5 907.7L171 907.8L171.5 908.2L172 908.1L172.5 907.9L173 908.2L173.5 907.8L174 908.2L174.5 908.3L175 908.2L175.5 908.3L176 907.9L176.5 908.1L177 908L177.5 908.4L178 908.5L178.5 908.1L179 908.2L179.5 908.2L180 908.6L180.5 908.1L181 908.6L181.5 908.5L182 908.2L182.5 908.7L183 908.1L183.5 908.1L184 908.3L184.5 908.1L185 908.8L185.5 908.5L186 908.6L186.5 908.3L187 908.6L187.5 908.8L188 908.7L188.5 908.3L189 908.5L189.5 909L190 908.6L190.5 908.5L191 909L191.5 909L192 908.5L192.5 909.1L193 908.7L193.5 909L194 908.8L194.5 908.6L195 908.6L195.5 908.7L196 909.1L196.5 908.8L197 908.6L197.5 909L198 908.6L198.5 908.8L199 909.1L199.5 909.2L200 909.1L200.5 909.1L201 909.1L201.5 909.3L202 909.1L202.5 908.8L203 909.4L203.5 909L204 908.8L204.5 909.3L205 909.2L205.5 908.9L206 909.2L206.5 908.9L207 909.1L207.5 909L208 909.6L208.5 909.3L209 909L209.5 909.1L210 909.1L210.5 909.6L211 909.3L211.5 909.5L212 909.7L212.5 909.2L213 909.7L213.5 909.3L214 909.6L214.5 909.3L215 909.8L215.5 909.7L216 909.4L216.5 909.5L217 909.7L217.5 909.8L218 910L218.5 909.6L219 909.7L219.5 910L220 909.5L220.5 909.9L221 909.8L221.5 909.4L222 909.6L222.5 910.1L223 910.1L223.5 910.2L224 910L224.5 910.2L225 910L225.5 910.1L226 909.6L226.5 910L227 909.8L227.5 910.2L228 910.3L228.5 910.2L229 910L229.5 909.9L230 909.8L230.5 910.1L231 910.3L231.5 909.9L232 910.4L232.5 910.5L233 910L233.5 910.3L234 910.1L234.5 910.2L235 910.3L235.5 910.4L236 910.1L236.5 910L237 910.5L237.5 910.1L238 910.1L238.5 910.2L239 910.7L239.5 910.2L240 910.7L240.5 910.7L241 910.6L241.5 910.5L242 910.7L242.5 910.2L243 910.8L243.5 910.4L244 910.4L244.5 910.3L245 911L245.5 910.8L246 910.3L246.5 910.9L247 910.5L247.5 911L248 910.8L248.5 910.8L249 910.7L249.5 910.8L250 910.6L250.5 910.5L251 910.9L251.5 910.9L252 911.1L252.5 910.9L253 910.8L253.5 910.9L254 910.7L254.5 910.8L255 910.8L255.5 911.2L256 911.3L256.5 910.8L257 911.1L257.5 910.8L258 911.4L258.5 911.2L259 911.1L259.5 911.4L260 910.9L260.5 911L261 911.3L261.5 911.1L262 911.1L262.5 911.6L263 911.3L263.5 911L264 911L264.5 911L265 911.4L265.5 911.4L266 911.6L266.5 911.6L267 911L267.5 911.3L268 911.2L268.5 911.8L269 911.3L269.5 911.7L270 911.4L270.5 911.4L271 911.3L271.5 911.6L272 911.9L272.5 911.9L273 911.6L273.5 911.7L274 911.7L274.5 911.9L275 911.8L275.5 911.7L276 911.6L276.5 911.8L277 911.4L277.5 911.4L278 912L278.5 911.8L279 911.5L279.5 912L280 911.6L280.5 912.1L281 911.5L281.5 911.8L282 912.2L282.5 912.1L283 911.9L283.5 911.9L284 912.2L284.5 911.7L285 912.3L285.5 912.3L286 911.7L286.5 911.7L287 912.1L287.5 911.8L288 911.8L288.5 912.2L289 912.1L289.5 912.2L290 912L290.5 912.2L291 912.1L291.5 912.5L292 912.4L292.5 912.1L293 912.5L293.5 912L294 912.2L294.5 912.5L295 912.2L295.5 912L296 912.2L296.5 912.4L297 912.1L297.5 912.2L298 912.6L298.5 912.6L299 912.5L299.5 912.7L300 912.8L300.5 912.8L301 912.2L301.5 912.8L302 912.4L302.5 912.4L303 912.4L303.5 912.9L304 912.5L304.5 912.7L305 912.8L305.5 912.9L306 912.5L306.5 912.8L307 912.8L307.5 912.8L308 913L308.5 912.8L309 913L309.6 912.7L310.1 913.2L310.6 913.2L311.1 913.1L311.6 912.7L312.1 913.1L312.6 913.2L313.1 913.2L313.6 912.9L314.1 913L314.6 913.3L315.1 913.1L315.6 913L316.1 912.9L316.6 913.4L317.1 912.9L317.6 913.2L318.1 913L318.6 913.4" fill="none" stroke="#5b1670" stroke-width="1" stroke-linejoin="round" shape-rendering="crispEdges" />
<path d="M318.4 917L318.7 918L319 915.2L319.4 920.1L319.7 912.6L320 921.1L320.3 912.9L320.6 922.6L321 910.9L321.3 924.2L321.6 906.8L321.9 927.7L322.2 911.2L322.6 925.4L322.9 912.2L323.2 922L323.5 913.7L323.8 920.4L324.2 915.1L324.5 917.9L324.8 917" fill="none" stroke="#5b1670" stroke-width="1.15" stroke-linejoin="round" shape-rendering="crispEdges" />
<path d="M320.4 906.3V929M319.6 912V924M321.6 909V926" stroke="#5b1670" stroke-width="1.1"/>
<path d="M324.5 919.2L325.2 920L326 921.2L326.7 920.8L327.3 920.4L328 920L328.7 920.4L329.4 920L330.1 920.4L330.9 920L331.6 920L332.3 920.4L333 920.4L333.7 920L334.4 920L335.1 920L335.8 920L336.5 920L337.2 919.6L337.9 920L338.6 919.6L339.3 919.6L340 919.6L340.7 919.6L341.4 919.2L342.1 919.6L342.9 919.6L343.6 919.2L344.3 919.2L345 919.6L345.7 919.2L346.4 919.2L347.1 918.8L347.9 919.2L348.6 919.2L349.3 919.2L350 918.8L350.7 918.8L351.4 918.8L352.1 918.8L352.9 919.2L353.6 918.8L354.3 918.8L355 918.4L355.7 918.4L356.4 918.4L357.1 918.4L357.9 918.8L358.6 918.4L359.3 918L360 918L360.7 918.4L361.4 918L362.1 918L362.9 918L363.6 917.6L364.3 918L365 917.6L365.7 916.8L366.4 916L367 914.8L367.7 914L368.4 914.4L369.1 914.4L369.8 914.4L370.5 914L371.2 914.4L371.9 914L372.6 914.4L373.3 914.4L374 914.4L374.3 910.8L374.6 921.6L375 914L375.8 914.8L376.5 915.2L377.2 914.4L378 914L378.7 914.4L379.3 914.8L380 914.8L380.8 914.8L381.6 914.4L382.4 914.4L383.3 920.8L384 920.8L384.7 920.8L385.4 920.8L386.1 920.8L386.8 920.4L387.5 920.8L388 917.2L388.7 917.2L389.3 917.2L390 916.8L390.7 916.8L391.3 916.8L392 916.8L392.7 917.2L393.3 917.2L394 917.2L394.7 917.2L395.4 917.2L396.1 917.2L396.8 917.2L397.5 917.6L398.2 917.6L398.9 917.6L399.6 917.2L400.3 917.2L401 917.2L401.7 917.2L402.4 917.2L403.1 917.6L403.8 917.2L404.5 917.2L405.2 917.2L405.9 917.2L406.6 917.2L407.3 917.6L408 917.2L408.7 917.6L409.4 917.2L410.1 917.6L410.8 917.2L411.5 917.2L412.2 917.6L412.9 917.2L413.6 917.6L414.3 917.6L415 917.2L415.7 917.2L416.4 917.6L417.1 917.2L417.8 917.6L418.5 917.6L419.2 917.2L419.9 917.2L420.6 917.6L421.3 917.6L422 917.6L422.7 917.2L423.4 917.6L424.1 917.2L424.8 917.6L425.5 917.6L426.2 917.2L426.9 917.6L427.6 917.6L428.3 917.6L429 917.6L429.7 917.2L430.4 917.6L431.1 917.2L431.8 917.6L432.5 917.6L433.2 917.6L433.9 917.6L434.6 917.2L435.3 917.6L436 917.6L436.7 917.6L437.4 917.6L438 917.6L438.7 917.6L439.4 917.6L439.7 915.6L440 917.6L440.7 918L441.4 917.6L442.1 917.6L442.9 918L443.6 918L444.3 917.6L445 917.6L445.7 917.6L446.4 917.6L447.1 918L447.8 918L448.5 918L449.2 918.4L449.9 918L450.6 918L451.2 918L451.9 918.4L452.6 918.4L453.3 918L454 918.4L454.7 918.4L455.4 918.4L456.1 918L456.8 918.4L457.5 918L458.2 918.4L458.9 918.4L459.6 918.4L460.3 918.4L461 918.4L461.7 918.8L462.4 918.8L463.1 918.8L463.8 918.8L464.4 918.8L465.1 918.4L465.8 918.8L466.5 918.8L467.2 918.8L467.9 918.8L468.6 918.8L469.3 919.2L470 919.2L470.8 918.8L471.5 919.6L472.2 919.6L473 920L473.7 919.6L474.4 919.2L475.1 919.2L475.9 919.6L476.6 919.2L477.3 919.2L478 919.2L478.7 918.8L479.4 919.2L480.1 919.2L480.9 919.2L481.6 919.2L482.3 919.2L483 919.2L483.7 919.2L484.4 919.2L485.1 918.8L485.9 919.2L486.6 919.2L487.3 919.6L488 919.2L488.7 919.2L489.4 919.2L490.2 919.6L490.9 919.6L491.6 919.6L492.3 919.6L493 918.8L493.8 918.4L494.5 918.4L495.2 917.2L496 915.2L496.7 914L497.4 912L498 908.8L498.6 906L499.6 902L500.3 900.4L501 899.6L501.7 899.2L502.3 898.8L503 898.8L503.7 898.4L504.3 898L505 898L505.8 897.6L506.5 897.2L507.2 896.8L508 896.8L508.8 896.4L509.5 896L510.2 896L511 896L511.7 894.8L512.3 894.4L513 894L513.7 893.2L514.4 892.8L515.1 892.4L515.8 891.6L516.5 891.2L517.2 890.8L517.9 890L518.6 889.6L519.3 888.8L520 888.4L520.7 887.6L521.3 887.2L522 886.8L522.7 886L523.3 885.6L524 884.8L524.7 884.4L525.3 883.2L526 882.8L526.7 882.8L527.3 882L528 881.2L528.7 880.4L529.3 880L530 879.2L530.7 878.8L531.3 878L532 877.6" fill="none" stroke="#5b1670" stroke-width="1" stroke-linejoin="round" shape-rendering="crispEdges" />
<path d="M1364.4 877.2L1365 881.2L1366 884.8L1367 889.6L1368 892.8L1369 896.8L1370 900L1371 902.8L1372 905.2L1372.7 906.4L1373.4 907.6L1374.2 909.2L1375 910L1375.8 911.2L1376.5 912.4L1377.2 912.8L1378 914L1379 915.2L1380 916L1381 916.8L1382 917.2L1383 918L1384 918.4L1385 919.2L1386 919.6L1386.8 919.6L1387.6 920L1388.4 920.4L1389.2 920.4L1390 920.4L1390.8 920.8L1391.6 920.4L1392.4 920.8L1393.2 920.8L1394 920.8L1394.7 920.8L1395.4 921.6L1396.2 921.2L1397 921.2L1397.8 922L1398.6 922.8L1399.3 922.8L1400 922.4L1400.7 922L1401.4 920.8L1402.2 920.8L1403 920.4L1404 921.6L1404.8 921.2L1405.5 921.2L1406.2 921.6L1407 921.6L1408 918.8L1408.8 918.4L1409.6 918L1410.3 916.8L1411 916L1411.8 916L1412.6 915.6L1413.3 915.6L1414.1 915.2L1414.8 915.2L1415.5 915.6L1416.3 915.6L1417 915.6L1418 916.8L1418.7 917.2L1419.4 917.6L1420.4 920.4L1421.2 920.4L1422 920.4L1422.8 920.4L1423.6 920.8L1424.3 920.4L1425.1 920.4L1425.9 920.4L1426.7 920.8L1427.5 920.4L1428.3 920.4L1429.1 920.8L1429.8 920.4L1430.6 920.4L1431.4 920.4L1432.2 920.4L1433 920.4L1434 921.2L1435 921.2L1435.8 921.6L1436.7 921.6L1437.5 921.6L1438.3 921.2L1439.2 921.2L1440 920.8L1440.8 920.8L1441.7 921.2L1442.5 921.2L1443.3 921.2L1444.2 921.2L1445 921.2L1445.8 921.2L1446.7 921.2L1447.5 921.6L1448.3 921.6L1449.2 921.6L1450 921.6L1450.8 921.2L1451.7 921.2L1452.5 921.6L1453.3 921.6L1454.2 921.6L1455 921.2L1455.8 921.6L1456.7 921.2L1457.5 921.2L1458.3 921.6L1459.2 921.2L1460 921.2L1460.8 921.6L1461.6 921.6L1462.4 921.6L1463.2 921.2L1464 921.2L1464.8 921.2L1465.6 921.6L1466.4 921.6L1467.2 921.6L1468 921.6L1468.8 921.2L1469.6 921.2L1470.4 921.6L1471.2 921.6L1472 921.6L1472.8 921.6L1473.6 921.6L1474.4 921.6L1475.2 921.6L1476 921.6L1476.8 921.6L1477.6 921.6L1478.4 921.6L1479.2 921.6L1480 921.6L1480.8 921.6L1481.6 921.6L1482.4 921.6L1483.2 921.6L1484 921.6L1484.8 922L1485.6 922L1486.4 922L1487.2 922L1488 921.6L1488.8 922L1489.6 922L1490.4 921.6L1491.2 921.6L1492 921.6L1492.8 922L1493.6 921.6L1494.4 922L1495.2 922L1496 921.6L1496.8 922L1497.6 922L1498.4 922L1499.2 922L1500 922L1500.8 922L1501.6 922L1502.4 922L1503.2 922L1504 922.4L1504.8 922L1505.6 922L1506.5 922L1507.3 922L1508.1 922.4L1508.9 922L1509.7 922L1510.5 922.4L1511.3 922.4L1512.1 922.4L1512.9 922L1513.7 922.4L1514.5 922.4L1515.3 922.4L1516.1 922.4L1516.9 922.4L1517.7 922.4L1518.5 922.4L1519.4 922.4L1520.2 922.4L1521 922.4L1521.8 922.4L1522.6 922.8L1523.4 922.4L1524.2 922.4L1525 922.8L1525.8 922.8L1526.6 922.8L1527.4 922.8L1528.2 922.8L1529 922.4L1529.8 922.8L1530.6 922.8L1531.5 922.4L1532.3 922.4L1533.1 922.8L1533.9 922.8L1534.7 923.2L1535.5 922.8L1536.3 923.2L1537.1 922.8L1537.9 922.8L1538.7 922.8L1539.5 923.2L1540.3 922.8L1541.1 922.8L1541.9 923.2L1542.7 923.2L1543.5 923.2L1544.4 923.2L1545.2 923.2L1546 922.8L1546.8 923.2L1547.6 923.2L1548.4 923.2L1549.2 923.2L1550 923.2L1550.8 923.2L1551.6 923.2L1552.4 923.2L1553.2 923.2L1554 923.2L1554.8 923.2L1555.6 923.2L1556.4 923.2L1557.2 923.2L1558 923.2L1558.8 923.6L1559.6 923.2L1560.3 923.6L1561.1 923.6L1561.9 923.6L1562.7 923.6L1563.5 923.6L1564.3 923.6L1565.1 923.6L1565.9 924L1566.7 924L1567.5 923.6L1568.3 923.6L1569.1 924L1569.9 923.6L1570.7 924L1571.5 923.6L1572.3 924L1573.1 923.6L1573.9 924L1574.7 924L1575.5 924L1576.3 924L1577.1 924L1577.9 924L1578.7 924L1579.4 924L1580.2 924L1581 924L1581.8 924L1582.6 924L1583.4 924L1584.2 924.4L1585 924.4L1585.8 924L1586.6 924L1587.4 924L1588.2 924.4L1589 924.4L1589.8 925.6L1590.5 926.8L1591.3 926.4L1592.1 926.4L1592.9 926.8L1593.8 926.4L1594.6 926.4L1595.4 926.8L1596.2 926.4L1597 926.4L1598 924.8L1598.8 924.8L1599.6 924.8L1600.3 924.8L1601.1 924.8L1601.9 924.4L1602.7 924.8L1603.4 924.4L1604.2 924.8L1605 924.4L1605.8 924.4L1606.6 924L1607.4 924L1608.2 924L1609 923.6L1609.9 922.8L1610.8 922.4L1611.7 921.6L1612.5 922.4L1613.2 922.8L1614 923.2L1614.8 923.2L1615.5 923.2L1616.2 923.2L1617 923.2L1617.8 923.6L1618.5 923.6L1619.2 923.6L1620 924L1620.8 923.6L1621.6 924L1622.4 924L1623.2 924L1624 924L1624.8 924L1625.6 924L1626.3 924L1627.1 924L1627.9 924L1628.7 924L1629.5 924L1630.3 924L1631.1 924L1631.9 924L1632.7 924L1633.5 924L1634.3 924L1635.1 924L1635.9 924.4L1636.7 924L1637.4 924L1638.2 924.4L1639 924.4L1639.8 924L1640.6 924.4L1641.4 924.4L1642.2 924.4L1643 924.4L1643.8 924.4L1644.6 924.4L1645.4 924.4L1646.2 924.4L1647 924.4L1647.8 924.8L1648.6 924.4L1649.4 929.2L1650.3 928.8L1651.1 928.8L1652 928.8L1652.8 928.4L1653.5 928L1654.2 928L1655 927.6L1655.8 927.6L1656.6 928L1657.4 928L1658.2 927.6L1659 927.6L1659.8 927.6L1660.6 927.6L1661.4 927.6L1662.2 927.6L1663 928L1663.8 928L1664.6 928L1665.4 928L1666.2 928L1667.1 928L1667.9 927.6L1668.7 928L1669.5 928L1670.3 927.6L1671.1 928L1671.9 927.6L1672.7 928L1673.5 928L1674.3 927.6L1675.1 928L1675.9 928L1676.7 928L1677.5 928L1678.3 928L1679.1 928L1679.9 928L1680.7 928L1681.5 928L1682.3 928L1683.1 928L1683.9 928.4L1684.7 928L1685.5 928L1686.3 928.4L1687.1 928L1687.9 928.4L1688.8 928L1689.6 928.4L1690.4 928.4L1691.2 928.4L1692 928.4L1692.8 928L1693.6 928.4L1694.4 928.4L1695.2 928.4L1696 928L1696.8 928.4L1697.6 928.4L1698.4 928.4L1699.2 928.4L1700 928.4L1700.8 928.4L1701.6 928.4L1702.4 928.4L1703.2 928.4L1704 928.4L1704.8 928.4L1705.6 928.8L1706.4 928.4L1707.2 928.4L1708 928.4L1708.8 928.4L1709.6 928.4L1710.4 928.8L1711.2 928.4L1712 928.8L1712.8 928.4L1713.6 928.8L1714.4 928.8L1715.2 928.8L1716 928.8L1716.8 928.8L1717.6 928.4L1718.4 928.8L1719.2 928.8L1720 928.8L1720.8 928.8L1721.6 928.8L1722.4 928.8L1723.2 928.8L1724 929.2L1724.8 929.2L1725.6 929.2L1726.4 928.8L1727.2 929.2L1728 929.2L1728.8 929.2L1729.6 928.8L1730.4 929.2L1731.2 928.8L1732 929.2L1732.8 929.2L1733.6 929.2L1734.4 929.2L1735.2 928.8L1736 929.2L1736.8 929.2L1737.6 929.2L1738.4 929.2L1739.2 929.6L1740 929.2L1740.8 929.2L1741.6 929.2L1742.4 929.2L1743.2 929.6L1744 929.2L1744.8 929.2L1745.6 929.6L1746.4 929.6L1747.2 929.2L1748 929.2L1748.8 929.6L1749.6 929.2L1750.4 929.6L1751.2 929.6L1752 929.2" fill="none" stroke="#5b1670" stroke-width="1" stroke-linejoin="round" shape-rendering="crispEdges" />
<path d="M55.5 69.0V74.0M55.5 79.0V84.0M55.5 89.0V94.0M55.5 99.0V104.0M55.5 109.0V114.0M55.5 119.0V124.0M55.5 129.0V134.0M55.5 139.0V144.0M55.5 149.0V154.0M55.5 159.0V164.0M55.5 169.0V173.0M55.5 175.0V179.0M55.5 184.0V189.0M55.5 194.0V199.0M55.5 204.0V209.0M55.5 214.0V219.0M55.5 224.0V229.0M55.5 234.0V239.0M55.5 244.0V249.0M55.5 254.0V259.0M55.5 264.0V269.0M55.5 274.0V279.0M55.5 284.0V289.0M55.5 297.0V302.0M55.5 307.0V312.0M55.5 317.0V322.0M55.5 327.0V332.0M55.5 337.0V342.0M55.5 347.0V352.0M55.5 357.0V362.0M55.5 367.0V372.0M55.5 377.0V382.0M55.5 387.0V392.0M55.5 397.0V402.0M55.5 409.0V411.0M55.5 416.0V421.0M55.5 426.0V431.0M55.5 436.0V441.0M55.5 446.0V451.0M55.5 456.0V461.0M55.5 466.0V471.0M55.5 476.0V481.0M55.5 486.0V491.0M55.5 496.0V501.0M55.5 506.0V511.0M55.5 516.0V521.0M55.5 531.0V536.0M55.5 541.0V546.0M55.5 551.0V556.0M55.5 561.0V566.0M55.5 571.0V576.0M55.5 581.0V586.0M55.5 591.0V596.0M55.5 601.0V606.0M55.5 611.0V616.0M55.5 621.0V626.0M55.5 631.0V636.0M55.5 644.5V649.5M55.5 654.5V659.5M55.5 664.5V669.5M55.5 674.5V679.5M55.5 684.5V689.5M55.5 694.5V699.5M55.5 704.5V709.5M55.5 714.5V719.5M55.5 724.5V729.5M55.5 734.5V739.5M55.5 744.5V749.5M55.5 754.5V758.0M55.5 761.0V766.0M55.5 771.0V776.0M55.5 781.0V786.0M55.5 791.0V796.0M55.5 801.0V806.0M55.5 811.0V816.0M55.5 821.0V826.0M55.5 831.0V836.0M55.5 841.0V846.0M55.5 851.0V856.0M55.5 861.0V866.0M55.5 871.0V875.0M55.5 877.0V879.0M55.5 884.0V889.0M55.5 894.0V899.0M55.5 904.0V909.0M55.5 914.0V919.0M55.5 924.0V929.0M55.5 934.0V939.0M55.5 944.0V949.0M55.5 954.0V959.0M55.5 964.0V969.0M55.5 974.0V979.0M55.5 984.0V989.0" stroke="#383838" stroke-width="1" fill="none" shape-rendering="crispEdges"/>
<path d="M3 161.5H1718M3 246.5H1739M3 349.5H1739M3 478.5H1739M3 583.5H1739M3 863.5H1718M3 976.5H1718" stroke-dasharray="5 5" stroke="#3a3a3a" stroke-width="1.2" fill="none" shape-rendering="crispEdges"/>
<polygon points="45,58 66,58 55.5,68" fill="#f7901e"/>
<g><path d="M46.2 644.1H63.7V662.5H58.8L55 668.6L51.2 662.5H46.2Z" fill="#050505" stroke="#f78c1e" stroke-width="2.5" stroke-linejoin="miter"/><text x="55" y="659" text-anchor="middle" font-size="15" font-weight="bold" fill="#f78c1e">T</text></g>
<path d="M1730.4 700.5L1742 690.6V699H1751.5V702H1742V710.5Z" fill="#2424be"/>
<g><path d="M1710.2 64.4H1742.6Q1745.2 64.6 1745.2 67.2V97.6Q1745 100 1742.8 98.6L1710 66.4Q1708.8 64.6 1710.2 64.4Z" fill="#4d4d4d" stroke="#111" stroke-width="1.3"/><circle cx="1737.2" cy="71.5" r="4" fill="none" stroke="#909090" stroke-width="1.3"/><path d="M1734.2 74.6L1728 80.6" stroke="#9a9a9a" stroke-width="2.2" stroke-linecap="round"/></g>
<g>
<path d="M9 102.6H77.5L83.6 115.6L77.5 128.6H9Q7 128.6 7 126.6V104.6Q7 102.6 9 102.6Z" fill="#e7e7e7" stroke="#1a1a1a" stroke-width="2" stroke-linejoin="round"/>
<path d="M32.6 102.6V128.6" stroke="#1a1a1a" stroke-width="2"/>
<text x="19.6" y="120.2" text-anchor="middle" font-size="12.6" fill="#111" letter-spacing=".2">C 1</text>
<text x="56.6" y="120.2" text-anchor="middle" font-size="12.6" fill="#111">20 V</text>
</g>
<g>
<path d="M9 219.2H77.5L83.6 232.2L77.5 245.2H9Q7 245.2 7 243.2V221.2Q7 219.2 9 219.2Z" fill="#e9f9fa" stroke="#25c3cb" stroke-width="2" stroke-linejoin="round"/>
<path d="M32.6 219.2V245.2" stroke="#25c3cb" stroke-width="2"/>
<text x="19.6" y="236.8" text-anchor="middle" font-size="12.6" fill="#111" letter-spacing=".2">C 2</text>
<text x="56.6" y="236.8" text-anchor="middle" font-size="12.6" fill="#111">300 mV</text>
</g>
<g><path d="M9 337.0H33.5L42 349.6L33.5 362.2H9Q7 362.2 7 360.2V339.0Q7 337.0 9 337.0Z" fill="#fdebee" stroke="#ea5a74" stroke-width="1.6" stroke-linejoin="round"/>
<text x="23.4" y="354.2" text-anchor="middle" font-size="12.6" fill="#d42a4c" letter-spacing=".2">C 3</text></g>
<g>
<path d="M9 453.5H77.5L83.6 466.5L77.5 479.5H9Q7 479.5 7 477.5V455.5Q7 453.5 9 453.5Z" fill="#f3f9ea" stroke="#84c42d" stroke-width="2" stroke-linejoin="round"/>
<path d="M32.6 453.5V479.5" stroke="#84c42d" stroke-width="2"/>
<text x="19.6" y="471.1" text-anchor="middle" font-size="12.6" fill="#111" letter-spacing=".2">C 4</text>
<text x="56.6" y="471.1" text-anchor="middle" font-size="12.6" fill="#111">200 mV</text>
</g>
<g><path d="M9 571.2H33.5L42 583.8L33.5 596.4H9Q7 596.4 7 594.4V573.2Q7 571.2 9 571.2Z" fill="#fef1e4" stroke="#f6a862" stroke-width="1.6" stroke-linejoin="round"/>
<text x="23.4" y="588.4" text-anchor="middle" font-size="12.6" fill="#111" letter-spacing=".2">C 5</text></g>
<g>
<path d="M9 687.5H77.5L83.6 700.5L77.5 713.5H9Q7 713.5 7 711.5V689.5Q7 687.5 9 687.5Z" fill="#e6e6f5" stroke="#111" stroke-width="2" stroke-linejoin="round"/>
<path d="M9 687.5H32.6V713.5H9Q7 713.5 7 711.5V689.5Q7 687.5 9 687.5Z" fill="#2323c4" stroke="#111" stroke-width="2"/>
<path d="M32.6 687.5V713.5" stroke="#111" stroke-width="2"/>
<text x="19.6" y="705.1" text-anchor="middle" font-size="12.6" fill="#fff" letter-spacing=".2">C 6</text>
<text x="56.6" y="705.1" text-anchor="middle" font-size="12.6" fill="#2a2ac0">3 V</text>
</g>
<g><path d="M9 851.0H33.5L42 863.6L33.5 876.2H9Q7 876.2 7 874.2V853.0Q7 851.0 9 851.0Z" fill="#fdeedd" stroke="#f3a458" stroke-width="1.6" stroke-linejoin="round"/>
<text x="23.4" y="868.2" text-anchor="middle" font-size="12.6" fill="#111" letter-spacing=".2">M 1</text></g>
<g><path d="M9 963.2H33.5L42 975.8L33.5 988.4H9Q7 988.4 7 986.4V965.2Q7 963.2 9 963.2Z" fill="#f1e6f5" stroke="#8f4aab" stroke-width="1.6" stroke-linejoin="round"/>
<text x="23.4" y="980.4" text-anchor="middle" font-size="12.6" fill="#7a3d96" letter-spacing=".2">M 2</text></g>
<rect x="3" y="875" width="60" height="2" fill="#555" shape-rendering="crispEdges"/>
</svg></div>
<svg class="t" style="left:1756px;top:498px" width="10" height="30" viewBox="0 0 10 30"><circle cx="5" cy="5.4" r="1.8" fill="#c4c4c4"/><circle cx="5" cy="15" r="1.8" fill="#c4c4c4"/><circle cx="5" cy="24.4" r="1.8" fill="#c4c4c4"/></svg>
<div id="side"><span class="t" style="top:-1.47px;font-size:15.5px;line-height:19px;color:#ededed;font-weight:bold;letter-spacing:0.64px;left:-125px;width:400px;text-align:center;">Add New...</span>
<div class="sbtn" style="left:8px;top:24px">
<span class="t" style="top:8.24px;font-size:14.9px;line-height:18px;color:#f4f4f4;letter-spacing:-0.29px;left:-169.5px;width:400px;text-align:center;">Cursors</span>
</div>
<div class="sbtn" style="left:80px;top:24px">
<span class="t" style="top:8.24px;font-size:14.9px;line-height:18px;color:#f4f4f4;letter-spacing:0.5px;left:-169.5px;width:400px;text-align:center;">Callout</span>
</div>
<div class="sbtn" style="left:8px;top:70px">
<span class="t" style="top:8.24px;font-size:14.9px;line-height:18px;color:#f4f4f4;letter-spacing:0.07px;left:-169.5px;width:400px;text-align:center;">Measure</span>
</div>
<div class="sbtn" style="left:80px;top:70px">
<span class="t" style="top:8.24px;font-size:14.9px;line-height:18px;color:#f4f4f4;letter-spacing:-0.36px;left:-169.5px;width:400px;text-align:center;">Search</span>
</div>
<div class="sbtn" style="left:8px;top:116px">
<span class="t" style="top:0.04px;font-size:14.9px;line-height:18px;color:#f4f4f4;letter-spacing:-0.33px;left:-169.5px;width:400px;text-align:center;">Results</span>
<span class="t" style="top:15.84px;font-size:14.9px;line-height:18px;color:#f4f4f4;letter-spacing:-0.06px;left:-169.5px;width:400px;text-align:center;">Table</span>
</div>
<div class="sbtn" style="left:80px;top:116px">
<span class="t" style="top:8.24px;font-size:14.9px;line-height:18px;color:#f4f4f4;letter-spacing:0.64px;left:-169.5px;width:400px;text-align:center;">Plot</span>
</div>
<div class="sbtn" style="left:8px;top:166px">
<svg class="t" style="left:17px;top:1.6px" width="32" height="30" viewBox="0 0 32 30"><rect x="3.2" y="4.2" width="20" height="18" fill="none" stroke="#b4b4b4" stroke-width="2" stroke-dasharray="3.6 2.4"/><circle cx="16" cy="10.6" r="4.6" fill="#2e2e2e" stroke="#b4b4b4" stroke-width="1.6"/><path d="M12.6 14.4L8 18.6" stroke="#b4b4b4" stroke-width="2.6" stroke-linecap="round"/><path d="M20.4 19.2L28 23.4L24.6 24.2L26.4 27.6L24.8 28.4L23 25L20.8 27.4Z" fill="#b8b8b8"/></svg>
</div>
<div class="sbtn" style="left:80px;top:166px">
<span class="t" style="top:8.24px;font-size:14.9px;line-height:18px;color:#f4f4f4;letter-spacing:0.62px;left:-169.5px;width:400px;text-align:center;">More...</span>
</div>
<div class="hr" style="left:3px;top:159px;width:145px"></div>
<div class="hr" style="left:3px;top:211px;width:145px"></div></div>
<div class="tab" style="left:3px;background:#1d1d1d"><span class="t" style="top:-0.91px;font-size:16.2px;line-height:19px;color:#f4e23c;left:5.4px;-webkit-text-stroke:.35px;transform:scaleX(.83);transform-origin:0 50%;">Ch 1</span></div>
<div class="badge" style="left:3px">
<div class="hd" style="background:#b3c0c0;height:21px"></div><div class="clip"><svg class="t" style="left:0;top:0" width="18" height="17" viewBox="0 0 18 17"><path d="M8.4 1.4L15.8 15.4H1Z" fill="#f7e600" stroke="#3a3560" stroke-width="1" stroke-linejoin="round"/><path d="M8.4 5.4V11.4M8.4 12.6V14" stroke="#b09a3a" stroke-width="1.5"/></svg><span class="t" style="top:-1.44px;font-size:16px;line-height:19px;color:#fff;letter-spacing:-0.1px;left:16.4px;">Clipping</span></div>
<span class="t" style="top:19.94px;font-size:14.6px;line-height:18px;color:#000;letter-spacing:-0.08px;left:5.6px;">5 V/div</span>
<span class="t" style="top:38.74px;font-size:14.6px;line-height:18px;color:#000;letter-spacing:0.2px;left:5.6px;">1 MΩ</span>
<span class="t" style="top:57.74px;font-size:14.6px;line-height:18px;color:#000;letter-spacing:-0.05px;left:5.6px;">200 kHz</span>
<span class="t" style="left:71px;top:58px;font-size:9px;font-weight:bold;color:#000;line-height:10px">B<span style="font-size:8px;position:relative;top:2.6px">W</span></span>
</div>
<div class="tab" style="left:98px;background:#1e4043"><span class="t" style="top:-0.91px;font-size:16.2px;line-height:19px;color:#2ad0d6;left:5.4px;-webkit-text-stroke:.35px;transform:scaleX(.83);transform-origin:0 50%;">Ch 2</span></div>
<div class="badge" style="left:98px">
<div class="hd" style="background:#b3c0c0;height:21px"></div><div class="clip"><svg class="t" style="left:0;top:0" width="18" height="17" viewBox="0 0 18 17"><path d="M8.4 1.4L15.8 15.4H1Z" fill="#f7e600" stroke="#3a3560" stroke-width="1" stroke-linejoin="round"/><path d="M8.4 5.4V11.4M8.4 12.6V14" stroke="#b09a3a" stroke-width="1.5"/></svg><span class="t" style="top:-1.44px;font-size:16px;line-height:19px;color:#fff;letter-spacing:-0.1px;left:16.4px;">Clipping</span></div>
<span class="t" style="top:19.94px;font-size:14.6px;line-height:18px;color:#000;letter-spacing:-0.08px;left:5.6px;">250 mV/div</span>
<span class="t" style="top:38.74px;font-size:14.6px;line-height:18px;color:#000;letter-spacing:0.2px;left:5.6px;">1 MΩ</span>
<span class="t" style="top:57.74px;font-size:14.6px;line-height:18px;color:#000;letter-spacing:-0.05px;left:5.6px;">200 kHz</span>
<span class="t" style="left:71px;top:58px;font-size:9px;font-weight:bold;color:#000;line-height:10px">B<span style="font-size:8px;position:relative;top:2.6px">W</span></span>
</div>
<div class="tab" style="left:193px;background:#45262b"><span class="t" style="top:-0.91px;font-size:16.2px;line-height:19px;color:#f4f4f4;left:5.4px;-webkit-text-stroke:.35px;transform:scaleX(.83);transform-origin:0 50%;">Ch 3</span></div>
<div class="badge" style="left:193px">
<div class="hd" style="background:#b3c0c0;height:21px"></div><div class="clip"><svg class="t" style="left:0;top:0" width="18" height="17" viewBox="0 0 18 17"><path d="M8.4 1.4L15.8 15.4H1Z" fill="#f7e600" stroke="#3a3560" stroke-width="1" stroke-linejoin="round"/><path d="M8.4 5.4V11.4M8.4 12.6V14" stroke="#b09a3a" stroke-width="1.5"/></svg><span class="t" style="top:-1.44px;font-size:16px;line-height:19px;color:#fff;letter-spacing:-0.1px;left:16.4px;">Clipping</span></div>
<span class="t" style="top:19.94px;font-size:14.6px;line-height:18px;color:#000;letter-spacing:-0.08px;left:5.6px;">450 mV/div</span>
<span class="t" style="top:38.74px;font-size:14.6px;line-height:18px;color:#000;letter-spacing:0.2px;left:5.6px;">1 MΩ</span>
<span class="t" style="top:57.74px;font-size:14.6px;line-height:18px;color:#000;letter-spacing:-0.05px;left:5.6px;">200 kHz</span>
<span class="t" style="left:71px;top:58px;font-size:9px;font-weight:bold;color:#000;line-height:10px">B<span style="font-size:8px;position:relative;top:2.6px">W</span></span>
</div>
<div class="badge" style="left:288px">
<div class="hd" style="background:#364328"><span class="t" style="top:-1.31px;font-size:16.2px;line-height:19px;color:#8ecf2f;left:5.4px;-webkit-text-stroke:.35px;transform:scaleX(.83);transform-origin:0 50%;">Ch 4</span></div>
<span class="t" style="top:19.94px;font-size:14.6px;line-height:18px;color:#000;letter-spacing:-0.08px;left:5.6px;">200 mV/div</span>
<span class="t" style="top:38.74px;font-size:14.6px;line-height:18px;color:#000;letter-spacing:0.2px;left:5.6px;">1 MΩ</span>
<span class="t" style="top:57.74px;font-size:14.6px;line-height:18px;color:#000;letter-spacing:-0.05px;left:5.6px;">200 kHz</span>
<span class="t" style="left:71px;top:58px;font-size:9px;font-weight:bold;color:#000;line-height:10px">B<span style="font-size:8px;position:relative;top:2.6px">W</span></span>
</div>
<div class="badge" style="left:383px">
<div class="hd" style="background:#4b3524"><span class="t" style="top:-1.31px;font-size:16.2px;line-height:19px;color:#ff9a2e;left:5.4px;-webkit-text-stroke:.35px;transform:scaleX(.83);transform-origin:0 50%;">Ch 5</span></div>
<span class="t" style="top:19.94px;font-size:14.6px;line-height:18px;color:#000;letter-spacing:-0.08px;left:5.6px;">1 V/div</span>
<span class="t" style="top:38.74px;font-size:14.6px;line-height:18px;color:#000;letter-spacing:0.2px;left:5.6px;">1 MΩ</span>
<span class="t" style="top:57.74px;font-size:14.6px;line-height:18px;color:#000;letter-spacing:-0.05px;left:5.6px;">200 kHz</span>
<span class="t" style="left:71px;top:58px;font-size:9px;font-weight:bold;color:#000;line-height:10px">B<span style="font-size:8px;position:relative;top:2.6px">W</span></span>
</div>
<div class="tab" style="left:478px;background:#2828c2"><span class="t" style="top:-0.91px;font-size:16.2px;line-height:19px;color:#ffffff;left:5.4px;-webkit-text-stroke:.35px;transform:scaleX(.83);transform-origin:0 50%;">Ch 6</span></div>
<div class="badge" style="left:478px">
<div class="hd" style="background:#b3c0c0;height:21px"></div><div class="clip"><svg class="t" style="left:0;top:0" width="18" height="17" viewBox="0 0 18 17"><path d="M8.4 1.4L15.8 15.4H1Z" fill="#f7e600" stroke="#3a3560" stroke-width="1" stroke-linejoin="round"/><path d="M8.4 5.4V11.4M8.4 12.6V14" stroke="#b09a3a" stroke-width="1.5"/></svg><span class="t" style="top:-1.44px;font-size:16px;line-height:19px;color:#fff;letter-spacing:-0.1px;left:16.4px;">Clipping</span></div>
<span class="t" style="top:19.94px;font-size:14.6px;line-height:18px;color:#000;letter-spacing:-0.08px;left:5.6px;">750 mV/div</span>
<span class="t" style="top:38.74px;font-size:14.6px;line-height:18px;color:#000;letter-spacing:0.2px;left:5.6px;">1 MΩ</span>
<span class="t" style="top:57.74px;font-size:14.6px;line-height:18px;color:#000;letter-spacing:-0.05px;left:5.6px;">200 kHz</span>
<span class="t" style="left:71px;top:58px;font-size:9px;font-weight:bold;color:#000;line-height:10px">B<span style="font-size:8px;position:relative;top:2.6px">W</span></span>
</div>
<div class="badge" style="left:573px">
<div class="hd" style="background:#4a3421"><span class="t" style="top:-1.47px;font-size:15.5px;line-height:19px;color:#f59b25;letter-spacing:0.3px;left:5.4px;-webkit-text-stroke:.3px;">Math 1</span></div>
<span class="t" style="top:19.94px;font-size:14.6px;line-height:18px;color:#000;font-weight:bold;letter-spacing:0.32px;left:5.4px;">72.8 mT/div</span>
<span class="t" style="top:38.74px;font-size:14.6px;line-height:18px;color:#000;letter-spacing:-0.05px;left:5.4px;">Intg(Ch2)…</span>
</div>
<div class="badge" style="left:668px">
<div class="hd" style="background:#2d2034"><span class="t" style="top:-1.47px;font-size:15.5px;line-height:19px;color:#f6f6f6;letter-spacing:0.3px;left:5.4px;-webkit-text-stroke:.3px;">Math 2</span></div>
<span class="t" style="top:19.94px;font-size:14.6px;line-height:18px;color:#000;font-weight:bold;letter-spacing:0.32px;left:5.4px;">959.85 A/…</span>
<span class="t" style="top:38.74px;font-size:14.6px;line-height:18px;color:#000;letter-spacing:-0.05px;left:5.4px;">-Intg(Ch3…</span>
</div>
<div class="vr" style="left:1118px;top:1000px;height:78px"></div>
<div class="vr" style="left:1269px;top:1000px;height:78px"></div>
<div class="vr" style="left:1811px;top:1000px;height:78px"></div>
<div class="addbtn" style="left:1129px"><i style="background:#b81e26"></i>
<span class="t" style="top:18.33px;font-size:15.2px;line-height:18px;color:#f2f2f2;letter-spacing:-0.1px;left:-181px;width:400px;text-align:center;">Add</span>
<span class="t" style="top:34.33px;font-size:15.2px;line-height:18px;color:#f2f2f2;letter-spacing:-0.1px;left:-181px;width:400px;text-align:center;">New</span>
<span class="t" style="top:50.13px;font-size:15.2px;line-height:18px;color:#f2f2f2;letter-spacing:-0.1px;left:-181px;width:400px;text-align:center;">Math</span>
</div>
<div class="addbtn" style="left:1174px"><i style="background:#b9b9c9"></i>
<span class="t" style="top:18.33px;font-size:15.2px;line-height:18px;color:#f2f2f2;letter-spacing:-0.1px;left:-181px;width:400px;text-align:center;">Add</span>
<span class="t" style="top:34.33px;font-size:15.2px;line-height:18px;color:#f2f2f2;letter-spacing:-0.1px;left:-181px;width:400px;text-align:center;">New</span>
<span class="t" style="top:50.13px;font-size:15.2px;line-height:18px;color:#f2f2f2;letter-spacing:-0.1px;left:-181px;width:400px;text-align:center;">Ref</span>
</div>
<div class="addbtn" style="left:1219px"><i style="background:#bf5ef2"></i>
<span class="t" style="top:18.33px;font-size:15.2px;line-height:18px;color:#f2f2f2;letter-spacing:-0.1px;left:-181px;width:400px;text-align:center;">Add</span>
<span class="t" style="top:34.33px;font-size:15.2px;line-height:18px;color:#f2f2f2;letter-spacing:-0.1px;left:-181px;width:400px;text-align:center;">New</span>
<span class="t" style="top:50.13px;font-size:15.2px;line-height:18px;color:#f2f2f2;letter-spacing:-0.1px;left:-181px;width:400px;text-align:center;">Bus</span>
</div>
<div class="info" style="left:1281px;width:198px"><div class="hd"><span class="t" style="top:-0.70px;font-size:15.3px;line-height:18px;color:#f4f4f4;letter-spacing:0.5px;left:5.2px;-webkit-text-stroke:.3px;">Horizontal</span></div>
<span class="t" style="top:18.74px;font-size:14.6px;line-height:18px;color:#000;letter-spacing:-0.1px;left:4.2px;">4 ms/div</span>
<span class="t" style="top:18.74px;font-size:14.6px;line-height:18px;color:#000;left:110px;">40 ms</span>
<span class="t" style="top:37.94px;font-size:14.6px;line-height:18px;color:#000;letter-spacing:-0.62px;left:4.2px;">SR: 1 MS/s</span>
<span class="t" style="top:37.94px;font-size:14.6px;line-height:18px;color:#000;letter-spacing:-0.1px;left:111px;">1 µs/pt</span>
<span class="t" style="top:56.94px;font-size:14.6px;line-height:18px;color:#000;letter-spacing:-0.3px;left:4.2px;">RL: 40 kpts</span>
<span class="t" style="top:57.34px;font-size:14.6px;line-height:18px;color:#000;letter-spacing:0.4px;left:124.6px;">3%</span>
<svg class="t" style="left:108px;top:57px" width="14" height="16" viewBox="0 0 14 16"><path d="M2.6 2H11V10.6H8.4L6.8 13.6L5.2 10.6H2.6Z" fill="#050505" stroke="#f7901e" stroke-width="1.4"/><text x="6.8" y="9.4" text-anchor="middle" font-family="Liberation Sans, sans-serif" font-size="7.6" font-weight="bold" fill="#fff">T</text></svg>
</div>
<div class="info" style="left:1486px;width:158px"><div class="hd"><span class="t" style="top:-0.70px;font-size:15.3px;line-height:18px;color:#f4f4f4;letter-spacing:0.2px;left:4.8px;-webkit-text-stroke:.3px;">Trigger</span></div>
<div class="t" style="left:5px;top:21.6px;width:29px;height:15.6px;border-radius:5px;background:#2525c4;border:1px solid #0c0c30"></div>
<span class="t" style="top:19.34px;font-size:14.6px;line-height:18px;color:#fff;left:-180.6px;width:400px;text-align:center;">6</span>
<svg class="t" style="left:42px;top:22px" width="22" height="16" viewBox="0 0 22 16"><path d="M2 13.4H6.6L13.6 3.6H19" fill="none" stroke="#2a2a9a" stroke-width="1.1"/></svg>
<span class="t" style="top:18.94px;font-size:14.6px;line-height:18px;color:#000;letter-spacing:0.2px;left:70px;">3 V</span>
</div>
<div class="info" style="left:1651px;width:148px"><div class="hd"><span class="t" style="top:-0.70px;font-size:15.3px;line-height:18px;color:#f4f4f4;letter-spacing:0.3px;left:5.2px;-webkit-text-stroke:.3px;">Acquisition</span></div>
<span class="t" style="top:18.74px;font-size:14.6px;line-height:18px;color:#000;left:3.8px;">Manual,</span>
<span class="t" style="top:18.74px;font-size:14.6px;line-height:18px;color:#000;letter-spacing:-0.3px;left:85px;">Analyze</span>
<span class="t" style="top:38.14px;font-size:14.6px;line-height:18px;color:#000;letter-spacing:-0.23px;left:3.8px;">High Res: 16 bits</span>
<span class="t" style="top:56.94px;font-size:14.6px;line-height:18px;color:#000;letter-spacing:-0.25px;left:3.8px;">Single: 1 /1</span>
</div>
<div class="t" style="left:1822px;top:999px;width:90px;height:36px;border-radius:6px;background:#f6212e;border:1px solid #7a1018"></div>
<span class="t" style="top:1006.85px;font-size:14px;line-height:17px;color:#fff;font-weight:bold;letter-spacing:-0.08px;left:1667px;width:400px;text-align:center;">Stopped</span>
<div class="t" style="left:1822px;top:1040px;width:90px;height:39px;border-radius:5px;background:#c9c9c9"></div>
<span class="t" style="top:1041.14px;font-size:14.6px;line-height:18px;color:#000;letter-spacing:0.1px;left:1667px;width:400px;text-align:center;">13 May 2025</span>
<span class="t" style="top:1057.34px;font-size:14.6px;line-height:18px;color:#000;letter-spacing:0.25px;left:1667px;width:400px;text-align:center;">10:32:55 AM</span>
</body></html>
